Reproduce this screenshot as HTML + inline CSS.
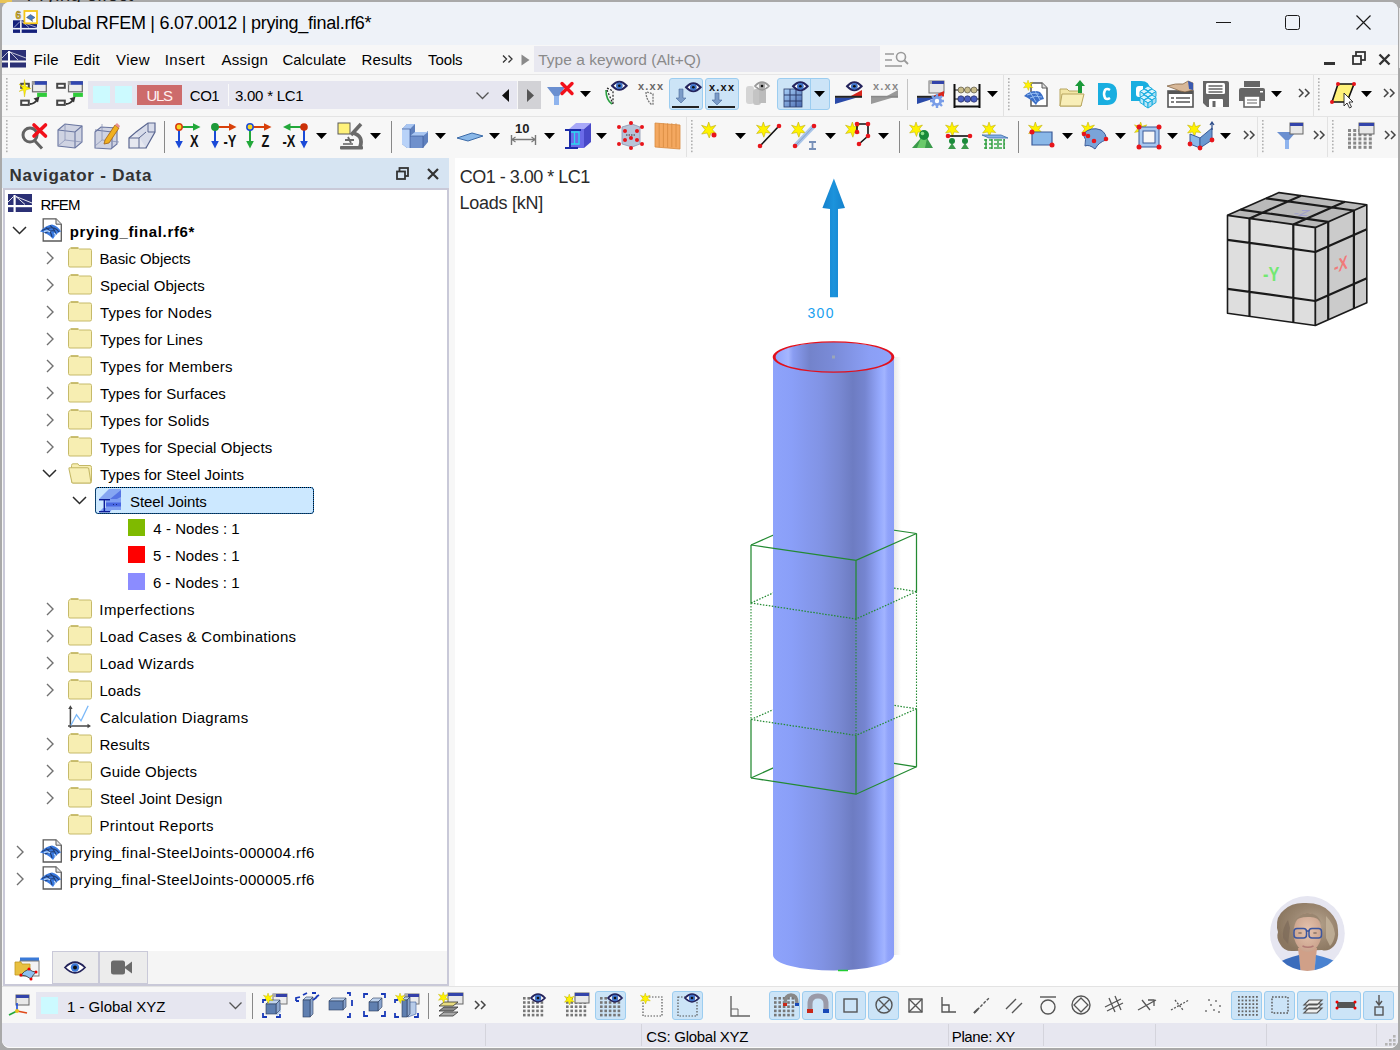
<!DOCTYPE html>
<html><head><meta charset="utf-8"><style>
*{box-sizing:border-box;margin:0;padding:0}
html,body{width:1400px;height:1050px;overflow:hidden;background:#a9a9a9;font-family:"Liberation Sans",sans-serif;color:#000}
.a{position:absolute}
svg.a{overflow:visible}
.t{position:absolute;white-space:pre;line-height:1}
</style></head><body>
<div class="t" style="left:26.5px;top:-14.58px;font-size:19px;color:#1e1e1e;letter-spacing:0.108px;">Prying effect</div>
<div class="a" style="left:0px;top:0px;width:12px;height:3px;background:#e9c558;"></div>
<div class="a" style="left:1399px;top:8px;width:1px;height:60px;background:#e4e4e4;"></div>
<div class="a" style="left:2px;top:2px;width:1396px;height:1046px;background:#f7f7f7;border-radius:8px"></div>
<div class="a" style="left:2px;top:2px;width:1396px;height:43px;background:#eef2f8;border-radius:8px 8px 0 0"></div>
<svg class="a" style="left:13px;top:10px" width="25" height="24" viewBox="0 0 25 24"><rect x="0" y="10.3" width="24" height="7.6" fill="#14207a"/><rect x="0" y="19.5" width="24" height="3.4" fill="#14207a"/><rect x="7" y="10.3" width="1.7" height="12.6" fill="#e8eaf4"/><path d="M1,17.5 L7,11.5 M9,11.5 L16,17.5 M9,12 L24,17.5" stroke="#c0c4e0" stroke-width="0.8" fill="none"/><rect x="11.4" y="1" width="12.6" height="12.3" fill="#fff" stroke="#f5c518" stroke-width="1.8"/><path d="M13.5,7.5 L17.5,4.5 L22,7.5 L19,9.5 L19.5,11.5 L17,9.5 Z" fill="#4a7ac0" stroke="#333" stroke-width="0.4"/><text x="2.6" y="8.6" font-family="Liberation Sans" font-weight="700" font-size="10" fill="#f0c020" stroke="#6a5a20" stroke-width="0.4">6</text></svg>
<div class="t" style="left:41.6px;top:13.76px;font-size:18px;letter-spacing:-0.274px;">Dlubal RFEM | 6.07.0012 | prying_final.rf6*</div>
<div class="a" style="left:1216px;top:22px;width:15px;height:1px;background:#1a1a1a;"></div>
<div class="a" style="left:1285px;top:15px;width:15px;height:15px;background:transparent;border:1.2px solid #1a1a1a;border-radius:2.5px"></div>
<svg class="a" style="left:1356px;top:15px" width="15" height="15" viewBox="0 0 15 15"><path d="M0.5,0.5 L14.5,14.5 M14.5,0.5 L0.5,14.5" stroke="#1a1a1a" stroke-width="1.2"/></svg>
<div class="a" style="left:2px;top:74px;width:1396px;height:1px;background:#e6e6e6;"></div>
<svg class="a" style="left:2px;top:50px" width="25" height="18" viewBox="0 0 25 18"><rect x="0" y="0" width="24" height="10.5" fill="#2b3075"/><rect x="0" y="12.5" width="24" height="5" fill="#2b3075"/><rect x="6" y="1" width="2" height="17" fill="#fff"/><path d="M0,8 L6,2 M8,2 L16,10 M8,2 L24,8" stroke="#fff" stroke-width="0.7" fill="none"/></svg>
<div class="t" style="left:33.6px;top:51.90px;font-size:15px;letter-spacing:0.3px;">File</div>
<div class="t" style="left:73.4px;top:51.90px;font-size:15px;letter-spacing:0.133px;">Edit</div>
<div class="t" style="left:116.0px;top:51.90px;font-size:15px;letter-spacing:0.433px;">View</div>
<div class="t" style="left:164.7px;top:51.90px;font-size:15px;letter-spacing:0.48px;">Insert</div>
<div class="t" style="left:221.4px;top:51.90px;font-size:15px;letter-spacing:0.3px;">Assign</div>
<div class="t" style="left:282.4px;top:51.90px;font-size:15px;letter-spacing:0.137px;">Calculate</div>
<div class="t" style="left:361.6px;top:51.90px;font-size:15px;letter-spacing:0.067px;">Results</div>
<div class="t" style="left:428.0px;top:51.90px;font-size:15px;letter-spacing:-0.1px;">Tools</div>
<svg class="a" style="left:502px;top:55px" width="12" height="8" viewBox="0 0 12 8"><path d="M1,0.5 L4.5,4 L1,7.5 M6.5,0.5 L10,4 L6.5,7.5" stroke="#333" stroke-width="1.3" fill="none"/></svg>
<svg class="a" style="left:521px;top:54px" width="9" height="12" viewBox="0 0 9 12"><path d="M0.5,0.5 L8.5,6 L0.5,11.5 Z" fill="#8a8a8a"/></svg>
<div class="a" style="left:534px;top:46px;width:346px;height:26px;background:#e8e8f0;"></div>
<div class="t" style="left:538.2px;top:52.28px;font-size:15.5px;color:#8a8a8a;letter-spacing:0.019px;">Type a keyword (Alt+Q)</div>
<svg class="a" style="left:884px;top:50px" width="26" height="20" viewBox="0 0 26 20"><path d="M1,4 L10,4 M1,10 L8,10 M1,16 L18,16" stroke="#9a9a9a" stroke-width="1.6"/><circle cx="17" cy="7" r="4.5" fill="none" stroke="#9a9a9a" stroke-width="1.6"/><path d="M20,10 L24,14" stroke="#9a9a9a" stroke-width="1.8"/></svg>
<div class="a" style="left:1324px;top:62px;width:11px;height:3px;background:#333;"></div>
<svg class="a" style="left:1352px;top:51px" width="14" height="14" viewBox="0 0 14 14"><rect x="4" y="1" width="9" height="8" fill="none" stroke="#333" stroke-width="1.8"/><rect x="1" y="5" width="8" height="8" fill="#f7f7f7" stroke="#333" stroke-width="1.8"/></svg>
<svg class="a" style="left:1378px;top:53px" width="13" height="13" viewBox="0 0 13 13"><path d="M1.5,1.5 L11.5,11.5 M11.5,1.5 L1.5,11.5" stroke="#333" stroke-width="2.4"/></svg>
<svg class="a" style="left:6px;top:78px" width="2" height="36" viewBox="0 0 2 36"><rect x="0" y="0.0" width="1.6" height="1.6" fill="#b0b0b0"/><rect x="0" y="3.4" width="1.6" height="1.6" fill="#b0b0b0"/><rect x="0" y="6.8" width="1.6" height="1.6" fill="#b0b0b0"/><rect x="0" y="10.2" width="1.6" height="1.6" fill="#b0b0b0"/><rect x="0" y="13.6" width="1.6" height="1.6" fill="#b0b0b0"/><rect x="0" y="17.0" width="1.6" height="1.6" fill="#b0b0b0"/><rect x="0" y="20.4" width="1.6" height="1.6" fill="#b0b0b0"/><rect x="0" y="23.8" width="1.6" height="1.6" fill="#b0b0b0"/><rect x="0" y="27.2" width="1.6" height="1.6" fill="#b0b0b0"/><rect x="0" y="30.599999999999998" width="1.6" height="1.6" fill="#b0b0b0"/></svg>
<svg class="a" style="left:20px;top:80px" width="28" height="28" viewBox="0 0 28 28"><rect x="1.2" y="3.8" width="7.6" height="4" fill="#fff" stroke="#484848" stroke-width="2"/><rect x="1.2" y="20.6" width="7.6" height="4.3" fill="#fff" stroke="#484848" stroke-width="2"/><rect x="12.5" y="1.8" width="13.8" height="10" fill="#ececec" stroke="#6a6a6a" stroke-width="1.2"/><rect x="14.5" y="1.2" width="12.4" height="3.6" fill="#3046b0"/><rect x="11.9" y="1.2" width="2.6" height="3.6" fill="#9a9a9a"/><rect x="17.1" y="12.8" width="9.8" height="4.1" fill="#30cc3a"/><path d="M10,24 Q14,24 17,20" stroke="#333" stroke-width="1.8" fill="none"/><path d="M13.5,18.5 L19.5,16.5 L18,22.5 Z" fill="#333"/><path d="M4.5,-0.5 L5.8,6.5 L11,8.5 L5.8,10 L4.5,17 L3.5,10 L-1,11.5 L3,8.5 L-1,4 L3.6,6.5 Z" fill="#fff200" stroke="#c8b400" stroke-width="0.4"/></svg>
<svg class="a" style="left:56px;top:80px" width="28" height="28" viewBox="0 0 28 28"><rect x="1.2" y="3.8" width="7.6" height="4" fill="#fff" stroke="#484848" stroke-width="2"/><rect x="1.2" y="20.6" width="7.6" height="4.3" fill="#fff" stroke="#484848" stroke-width="2"/><rect x="12.5" y="1.8" width="13.8" height="10" fill="#ececec" stroke="#6a6a6a" stroke-width="1.2"/><rect x="14.5" y="1.2" width="12.4" height="3.6" fill="#3046b0"/><rect x="11.9" y="1.2" width="2.6" height="3.6" fill="#9a9a9a"/><rect x="17.1" y="12.8" width="9.8" height="4.1" fill="#30cc3a"/><path d="M10,24 Q14,24 17,20" stroke="#333" stroke-width="1.8" fill="none"/><path d="M13.5,18.5 L19.5,16.5 L18,22.5 Z" fill="#333"/></svg>
<div class="a" style="left:88px;top:81px;width:405px;height:28px;background:#e6e6f0;"></div>
<div class="a" style="left:93px;top:86px;width:17px;height:17px;background:#ccfaff;"></div>
<div class="a" style="left:115px;top:86px;width:17px;height:17px;background:#ccfaff;"></div>
<div class="a" style="left:137px;top:85px;width:45px;height:20px;background:#cd6b6b;"></div>
<div class="t" style="left:146.4px;top:88.30px;font-size:15px;color:#fff0f0;letter-spacing:-1.25px;">ULS</div>
<div class="t" style="left:189.8px;top:88.30px;font-size:15px;letter-spacing:-0.5px;">CO1</div>
<div class="a" style="left:228px;top:84px;width:1px;height:22px;background:#fafafa;"></div>
<div class="t" style="left:235.0px;top:88.30px;font-size:15px;letter-spacing:-0.244px;">3.00 * LC1</div>
<svg class="a" style="left:476px;top:92px" width="13" height="8" viewBox="0 0 13 8"><path d="M0.5,0.5 L6.5,6.5 L12.5,0.5" stroke="#555" stroke-width="1.3" fill="none"/></svg>
<div class="a" style="left:493px;top:81px;width:24px;height:28px;background:#e6e6f0;"></div>
<svg class="a" style="left:502px;top:89px" width="8" height="13" viewBox="0 0 8 13"><path d="M7,0 L7,13 L0,6.5 Z" fill="#111"/></svg>
<div class="a" style="left:518px;top:81px;width:23px;height:28px;background:#d2d2d6;"></div>
<svg class="a" style="left:527px;top:89px" width="8" height="13" viewBox="0 0 8 13"><path d="M0,0 L0,13 L7,6.5 Z" fill="#555"/></svg>
<svg class="a" style="left:547px;top:81px" width="28" height="28" viewBox="0 0 28 28"><path d="M0,6 L18,6 L12,15 L12,24 L7,24 L7,15 Z" fill="#6a8fd0"/><path d="M7,15 L12,15 L12,24 L7,24 Z" fill="#8fb4ee"/><path d="M15,2.5 L25,12.5 M25,2.5 L15,12.5" stroke="#f2101a" stroke-width="3.4" stroke-linecap="round"/></svg>
<svg class="a" style="left:580px;top:91px" width="11" height="6" viewBox="0 0 11 6"><path d="M0,0 L11,0 L5.5,6 Z" fill="#000"/></svg>
<svg class="a" style="left:604px;top:80px" width="28" height="28" viewBox="0 0 28 28"><path d="M2,10 Q2,20 8,24" stroke="#2aa040" stroke-width="1.6" fill="none"/><path d="M3,8 L9,11 L9,24 M3,10 L9,24" stroke="#222" stroke-width="1.2" stroke-dasharray="2,1.5" fill="none"/><g transform="translate(8,0.5) scale(1.05)"><path d="M0,5 Q7,-2.5 14,5 Q7,12.5 0,5 Z" fill="#fff" stroke="#24235c" stroke-width="1.8"/><circle cx="7" cy="5" r="3.2" fill="#3f72c9"/><circle cx="7" cy="5" r="1.3" fill="#111"/></g></svg>
<svg class="a" style="left:638px;top:80px" width="28" height="28" viewBox="0 0 28 28"><text x="0" y="9.5" font-family="Liberation Sans" font-weight="700" font-size="11" fill="#666" letter-spacing="1.2">x.xx</text><path d="M8,12 Q8,20 14,25 M9,12 L15,14 L15,25" stroke="#777" stroke-width="1.3" fill="none" stroke-dasharray="2,1"/></svg>
<div class="a" style="left:669px;top:78px;width:34px;height:32px;background:#cce4f7;border:1px solid #9ccdf0;border-radius:3px"></div>
<svg class="a" style="left:671px;top:81px" width="28" height="28" viewBox="0 0 28 28"><path d="M8,8 L12,8 L12,17 L15,17 L10,22 L5,17 L8,17 Z" fill="#7b9cc8" stroke="#4a6a9a" stroke-width="0.6"/><rect x="1" y="25" width="27" height="2" fill="#222"/><g transform="translate(15,1) scale(1.05)"><path d="M0,5 Q7,-2.5 14,5 Q7,12.5 0,5 Z" fill="#fff" stroke="#24235c" stroke-width="1.8"/><circle cx="7" cy="5" r="3.2" fill="#3f72c9"/><circle cx="7" cy="5" r="1.3" fill="#111"/></g></svg>
<div class="a" style="left:705px;top:78px;width:34px;height:32px;background:#cce4f7;border:1px solid #9ccdf0;border-radius:3px"></div>
<svg class="a" style="left:707px;top:81px" width="28" height="28" viewBox="0 0 28 28"><text x="2" y="9.5" font-family="Liberation Sans" font-weight="700" font-size="11" fill="#111" letter-spacing="1.2">x.xx</text><path d="M8,12 L12,12 L12,19 L15,19 L10,24 L5,19 L8,19 Z" fill="#7b9cc8" stroke="#4a6a9a" stroke-width="0.6"/><rect x="1" y="25" width="27" height="2" fill="#222"/></svg>
<svg class="a" style="left:744px;top:80px" width="28" height="28" viewBox="0 0 28 28"><rect x="2" y="6" width="8" height="18" rx="3" fill="#d4d4d4"/><rect x="9" y="9" width="8" height="16" rx="3" fill="#c4c4c4"/><rect x="15" y="10" width="7" height="13" fill="#bcbcbc"/><g transform="translate(11,1) scale(1.0)"><path d="M0,5 Q7,-2.5 14,5 Q7,12.5 0,5 Z" fill="#fff" stroke="#999" stroke-width="1.8"/><circle cx="7" cy="5" r="3.2" fill="#aaa"/><circle cx="7" cy="5" r="1.3" fill="#111"/></g></svg>
<div class="a" style="left:777px;top:78px;width:53px;height:32px;background:#cce4f7;border:1px solid #9ccdf0;border-radius:3px"></div>
<div class="a" style="left:810px;top:79px;width:1px;height:30px;background:#9ccdf0;"></div>
<svg class="a" style="left:780px;top:80px" width="28" height="28" viewBox="0 0 28 28"><defs><linearGradient id="gegr" x1="0" y1="0" x2="1" y2="1"><stop offset="0" stop-color="#a8d0f8"/><stop offset="1" stop-color="#4a6ab0"/></linearGradient></defs><rect x="4" y="9" width="18" height="18" fill="url(#gegr)" stroke="#2a3a6a" stroke-width="0.8"/><path d="M10,9 L10,27 M4,15 L22,15" stroke="#2a3a6a" stroke-width="1"/><path d="M16,9 L16,27 M4,21 L22,21" stroke="#2a3a6a" stroke-width="1"/><g transform="translate(13,1) scale(1.05)"><path d="M0,5 Q7,-2.5 14,5 Q7,12.5 0,5 Z" fill="#fff" stroke="#24235c" stroke-width="1.8"/><circle cx="7" cy="5" r="3.2" fill="#3f72c9"/><circle cx="7" cy="5" r="1.3" fill="#111"/></g></svg>
<svg class="a" style="left:814px;top:91px" width="11" height="6" viewBox="0 0 11 6"><path d="M0,0 L11,0 L5.5,6 Z" fill="#000"/></svg>
<svg class="a" style="left:835px;top:80px" width="28" height="28" viewBox="0 0 28 28"><path d="M15,16.5 L27,16.5 L27,10 Z" fill="#d9261c"/><path d="M0,17.5 L22,17.5 L0,24 Z" fill="#2a4aa8"/><rect x="0" y="15.8" width="27" height="2" fill="#222"/><g transform="translate(12,1) scale(1.05)"><path d="M0,5 Q7,-2.5 14,5 Q7,12.5 0,5 Z" fill="#fff" stroke="#24235c" stroke-width="1.8"/><circle cx="7" cy="5" r="3.2" fill="#3f72c9"/><circle cx="7" cy="5" r="1.3" fill="#111"/></g></svg>
<svg class="a" style="left:871px;top:80px" width="28" height="28" viewBox="0 0 28 28"><path d="M15,16.5 L27,16.5 L27,10 Z" fill="#9a9a9a"/><path d="M0,17.5 L22,17.5 L0,24 Z" fill="#9a9a9a"/><rect x="0" y="15.8" width="27" height="2" fill="#888"/><text x="2" y="9.5" font-family="Liberation Sans" font-weight="700" font-size="11" fill="#888" letter-spacing="1.2">x.xx</text></svg>
<div class="a" style="left:907px;top:79px;width:1px;height:31px;background:#c4c4c4;"></div>
<svg class="a" style="left:917px;top:80px" width="28" height="28" viewBox="0 0 28 28"><rect x="12" y="1" width="15" height="12" fill="#e8e8e8" stroke="#777" stroke-width="1"/><rect x="12" y="1" width="15" height="3" fill="#3344aa"/><rect x="12" y="1" width="3" height="3" fill="#aaa"/><path d="M15,16.5 L27,16.5 L27,11 Z" fill="#d9261c"/><path d="M0,17.5 L20,17.5 L0,24 Z" fill="#2a4aa8"/><rect x="0" y="15.8" width="22" height="2" fill="#222"/><path d="M20,14 L20,28 M13,21 L27,21 M15,16 L25,26 M25,16 L15,26" stroke="#7a9ee8" stroke-width="2.4"/><circle cx="20" cy="21" r="5" fill="#7a9ee8"/><circle cx="20" cy="21" r="2.2" fill="#fff"/></svg>
<svg class="a" style="left:953px;top:80px" width="28" height="28" viewBox="0 0 28 28"><path d="M1.5,4 L1.5,28 M26.5,4 L26.5,28 M1.5,26.5 L26.5,26.5" stroke="#111" stroke-width="2"/><path d="M1.5,10 L26.5,10 M1.5,19 L26.5,19" stroke="#111" stroke-width="1"/><circle cx="8" cy="10" r="3" fill="#c8bc8a" stroke="#5a5440" stroke-width="0.7"/><circle cx="8" cy="19" r="3.2" fill="#4a5ec0" stroke="#2a3060" stroke-width="0.7"/><circle cx="14.5" cy="10" r="3" fill="#c8bc8a" stroke="#5a5440" stroke-width="0.7"/><circle cx="14.5" cy="19" r="3.2" fill="#4a5ec0" stroke="#2a3060" stroke-width="0.7"/><circle cx="21" cy="10" r="3" fill="#c8bc8a" stroke="#5a5440" stroke-width="0.7"/><circle cx="21" cy="19" r="3.2" fill="#4a5ec0" stroke="#2a3060" stroke-width="0.7"/></svg>
<svg class="a" style="left:987px;top:91px" width="11" height="6" viewBox="0 0 11 6"><path d="M0,0 L11,0 L5.5,6 Z" fill="#000"/></svg>
<div class="a" style="left:1003px;top:75px;width:1px;height:41px;background:#e2e2e2;"></div>
<svg class="a" style="left:1008px;top:78px" width="2" height="36" viewBox="0 0 2 36"><rect x="0" y="0.0" width="1.6" height="1.6" fill="#b0b0b0"/><rect x="0" y="3.4" width="1.6" height="1.6" fill="#b0b0b0"/><rect x="0" y="6.8" width="1.6" height="1.6" fill="#b0b0b0"/><rect x="0" y="10.2" width="1.6" height="1.6" fill="#b0b0b0"/><rect x="0" y="13.6" width="1.6" height="1.6" fill="#b0b0b0"/><rect x="0" y="17.0" width="1.6" height="1.6" fill="#b0b0b0"/><rect x="0" y="20.4" width="1.6" height="1.6" fill="#b0b0b0"/><rect x="0" y="23.8" width="1.6" height="1.6" fill="#b0b0b0"/><rect x="0" y="27.2" width="1.6" height="1.6" fill="#b0b0b0"/><rect x="0" y="30.599999999999998" width="1.6" height="1.6" fill="#b0b0b0"/></svg>
<svg class="a" style="left:1022px;top:80px" width="28" height="28" viewBox="0 0 28 28"><path d="M9,3 L20,3 L25,8 L25,26 L9,26 Z" fill="#fff" stroke="#5a5a5a" stroke-width="1.5"/><path d="M20,3 L20,8 L25,8" fill="#ddd" stroke="#5a5a5a" stroke-width="1"/><path d="M2,16 Q10,9 18,12 Q21,15 22,19 Q16,20 14,25 Q9,19 2,16 Z" fill="#3b6fc8"/><path d="M5,15 Q11,12 17,14 M8,18 Q13,15 20,17 M8,12 L14,22 M13,11 L18,20" stroke="#9cc4f4" stroke-width="0.9" fill="none"/><g transform="translate(1,0) scale(0.72)"><path d="M7,0 L8.6,4.6 L13.5,3 L10.3,7 L13.8,10.6 L9,10 L7.5,14.5 L5.6,10 L0.6,11 L3.8,7 L0.5,3 L5.4,4.6 Z" fill="#fff200" stroke="#b8a800" stroke-width="0.5"/></g></svg>
<svg class="a" style="left:1059px;top:80px" width="28" height="28" viewBox="0 0 28 28"><path d="M1,9 L8,9 L10,11 L22,11 L22,26 L1,26 Z" fill="#f3e6a6" stroke="#b8a660" stroke-width="1"/><path d="M3,14 L25,14 L22,26 L1,26 Z" fill="#f8eeb8" stroke="#b8a660" stroke-width="1"/><path d="M19,13 L19,6 L16,6 L21,0 L26,6 L23,6 L23,13 Z" fill="#1a9a3a"/></svg>
<svg class="a" style="left:1097px;top:80px" width="28" height="28" viewBox="0 0 28 28"><path d="M1,3 L10,3 Q20,3 20,14 Q20,25 10,25 L1,25 Z" fill="#19aee0"/><path d="M13,10 Q10,8 8,10 Q6,14 8,18 Q10,20 13,18" stroke="#fff" stroke-width="2.5" fill="none"/></svg>
<svg class="a" style="left:1130px;top:80px" width="28" height="28" viewBox="0 0 28 28"><path d="M1,1 L11,1 Q20,1 20,10 L20,21 L1,21 Z" fill="#19aee0"/><path d="M6,9 Q6,6 9,6 L13,6 L13,17 L9,17 Q6,17 6,14 Z" fill="#fff"/><path d="M14,8.5 L18,6 L22,8.5 L18,11 Z" fill="#d6f2fc" stroke="#19aee0" stroke-width="1"/><path d="M14,8.5 L18,11 L18,16 L14,13.5 Z" fill="#bfe8f8" stroke="#19aee0" stroke-width="1"/><path d="M22,8.5 L18,11 L18,16 L22,13.5 Z" fill="#a8dcf2" stroke="#19aee0" stroke-width="1"/><path d="M10,11.5 L14,9 L18,11.5 L14,14 Z" fill="#d6f2fc" stroke="#19aee0" stroke-width="1"/><path d="M10,11.5 L14,14 L14,19 L10,16.5 Z" fill="#bfe8f8" stroke="#19aee0" stroke-width="1"/><path d="M18,11.5 L14,14 L14,19 L18,16.5 Z" fill="#a8dcf2" stroke="#19aee0" stroke-width="1"/><path d="M18,11.5 L22,9 L26,11.5 L22,14 Z" fill="#d6f2fc" stroke="#19aee0" stroke-width="1"/><path d="M18,11.5 L22,14 L22,19 L18,16.5 Z" fill="#bfe8f8" stroke="#19aee0" stroke-width="1"/><path d="M26,11.5 L22,14 L22,19 L26,16.5 Z" fill="#a8dcf2" stroke="#19aee0" stroke-width="1"/><path d="M14,14.5 L18,12 L22,14.5 L18,17 Z" fill="#d6f2fc" stroke="#19aee0" stroke-width="1"/><path d="M14,14.5 L18,17 L18,22 L14,19.5 Z" fill="#bfe8f8" stroke="#19aee0" stroke-width="1"/><path d="M22,14.5 L18,17 L18,22 L22,19.5 Z" fill="#a8dcf2" stroke="#19aee0" stroke-width="1"/><path d="M10,17.5 L14,15 L18,17.5 L14,20 Z" fill="#d6f2fc" stroke="#19aee0" stroke-width="1"/><path d="M10,17.5 L14,20 L14,25 L10,22.5 Z" fill="#bfe8f8" stroke="#19aee0" stroke-width="1"/><path d="M18,17.5 L14,20 L14,25 L18,22.5 Z" fill="#a8dcf2" stroke="#19aee0" stroke-width="1"/><path d="M18,17.5 L22,15 L26,17.5 L22,20 Z" fill="#d6f2fc" stroke="#19aee0" stroke-width="1"/><path d="M18,17.5 L22,20 L22,25 L18,22.5 Z" fill="#bfe8f8" stroke="#19aee0" stroke-width="1"/><path d="M26,17.5 L22,20 L22,25 L26,22.5 Z" fill="#a8dcf2" stroke="#19aee0" stroke-width="1"/><path d="M14,20.5 L18,18 L22,20.5 L18,23 Z" fill="#d6f2fc" stroke="#19aee0" stroke-width="1"/><path d="M14,20.5 L18,23 L18,28 L14,25.5 Z" fill="#bfe8f8" stroke="#19aee0" stroke-width="1"/><path d="M22,20.5 L18,23 L18,28 L22,25.5 Z" fill="#a8dcf2" stroke="#19aee0" stroke-width="1"/></svg>
<svg class="a" style="left:1166px;top:80px" width="28" height="28" viewBox="0 0 28 28"><rect x="2" y="11" width="25" height="16" fill="#fff" stroke="#555" stroke-width="1.6"/><rect x="2" y="11" width="25" height="3" fill="#555"/><path d="M5,18 L8,18 M10,18 L24,18 M5,22 L8,22 M10,22 L24,22" stroke="#555" stroke-width="1.4"/><path d="M1,6 Q10,3 17,4 L22,1 L27,3 L27,10 L19,12 Q12,11 9,9 Z" fill="#d8b898" stroke="#7a5a3a" stroke-width="0.7"/><path d="M22,1 L27,3 L27,10 L23,9 Z" fill="#3a5ab0"/></svg>
<svg class="a" style="left:1202px;top:80px" width="28" height="28" viewBox="0 0 28 28"><path d="M1,1 L25,1 Q27,1 27,3 L27,27 L5,27 L1,23 Z" fill="#666"/><rect x="4" y="3" width="19" height="11" rx="1.5" fill="#fff"/><path d="M6.5,6 L20.5,6 M6.5,9 L20.5,9 M6.5,12 L20.5,12" stroke="#666" stroke-width="1.3"/><path d="M7,27 L7,20 Q7,19 8,19 L20,19 Q21,19 21,20 L21,27 Z" fill="#fff"/><rect x="10.5" y="21" width="3" height="6" fill="#666"/></svg>
<svg class="a" style="left:1238px;top:80px" width="28" height="28" viewBox="0 0 28 28"><rect x="6" y="1" width="16" height="6" fill="#666"/><path d="M1,10 Q1,8 3,8 L25,8 Q27,8 27,10 L27,21 L1,21 Z" fill="#666"/><rect x="6" y="16" width="16" height="11" fill="#fff" stroke="#666" stroke-width="1.6"/><path d="M9,20 L19,20 M9,23 L19,23" stroke="#666" stroke-width="1.2"/><rect x="22" y="11" width="3" height="1.5" fill="#fff"/></svg>
<svg class="a" style="left:1271px;top:91px" width="11" height="6" viewBox="0 0 11 6"><path d="M0,0 L11,0 L5.5,6 Z" fill="#000"/></svg>
<svg class="a" style="left:1298px;top:87.5px" width="12" height="10" viewBox="0 0 12 10"><path d="M1,1 L5,5 L1,9 M7,1 L11,5 L7,9" stroke="#444" stroke-width="1.5" fill="none"/></svg>
<div class="a" style="left:1313px;top:75px;width:1px;height:41px;background:#e2e2e2;"></div>
<svg class="a" style="left:1318px;top:78px" width="2" height="36" viewBox="0 0 2 36"><rect x="0" y="0.0" width="1.6" height="1.6" fill="#b0b0b0"/><rect x="0" y="3.4" width="1.6" height="1.6" fill="#b0b0b0"/><rect x="0" y="6.8" width="1.6" height="1.6" fill="#b0b0b0"/><rect x="0" y="10.2" width="1.6" height="1.6" fill="#b0b0b0"/><rect x="0" y="13.6" width="1.6" height="1.6" fill="#b0b0b0"/><rect x="0" y="17.0" width="1.6" height="1.6" fill="#b0b0b0"/><rect x="0" y="20.4" width="1.6" height="1.6" fill="#b0b0b0"/><rect x="0" y="23.8" width="1.6" height="1.6" fill="#b0b0b0"/><rect x="0" y="27.2" width="1.6" height="1.6" fill="#b0b0b0"/><rect x="0" y="30.599999999999998" width="1.6" height="1.6" fill="#b0b0b0"/></svg>
<svg class="a" style="left:1330px;top:81px" width="28" height="28" viewBox="0 0 28 28"><path d="M8,3 L24,3 L17,21 L2,21 Z" fill="#fff27a" stroke="#111" stroke-width="1.6"/><circle cx="8" cy="3" r="2" fill="#e8151b"/><circle cx="24" cy="3" r="2" fill="#e8151b"/><circle cx="2" cy="21" r="2" fill="#e8151b"/><circle cx="17" cy="21" r="2" fill="#e8151b"/><path d="M14,12 L14,25 L17,22 L19.5,27 L21.5,26 L19,21 L23,21 Z" fill="#fff" stroke="#222" stroke-width="0.9"/></svg>
<svg class="a" style="left:1361px;top:91px" width="11" height="6" viewBox="0 0 11 6"><path d="M0,0 L11,0 L5.5,6 Z" fill="#000"/></svg>
<svg class="a" style="left:1383px;top:87.5px" width="12" height="10" viewBox="0 0 12 10"><path d="M1,1 L5,5 L1,9 M7,1 L11,5 L7,9" stroke="#444" stroke-width="1.5" fill="none"/></svg>
<div class="a" style="left:2px;top:116px;width:1396px;height:1px;background:#e4e4e4;"></div>
<svg class="a" style="left:6px;top:120px" width="2" height="36" viewBox="0 0 2 36"><rect x="0" y="0.0" width="1.6" height="1.6" fill="#b0b0b0"/><rect x="0" y="3.4" width="1.6" height="1.6" fill="#b0b0b0"/><rect x="0" y="6.8" width="1.6" height="1.6" fill="#b0b0b0"/><rect x="0" y="10.2" width="1.6" height="1.6" fill="#b0b0b0"/><rect x="0" y="13.6" width="1.6" height="1.6" fill="#b0b0b0"/><rect x="0" y="17.0" width="1.6" height="1.6" fill="#b0b0b0"/><rect x="0" y="20.4" width="1.6" height="1.6" fill="#b0b0b0"/><rect x="0" y="23.8" width="1.6" height="1.6" fill="#b0b0b0"/><rect x="0" y="27.2" width="1.6" height="1.6" fill="#b0b0b0"/><rect x="0" y="30.599999999999998" width="1.6" height="1.6" fill="#b0b0b0"/></svg>
<svg class="a" style="left:20px;top:122px" width="28" height="28" viewBox="0 0 28 28"><circle cx="10" cy="13" r="7" fill="none" stroke="#626262" stroke-width="3"/><path d="M15,19 L22,26.5" stroke="#626262" stroke-width="3"/><path d="M14,3 L25.5,14 M25.5,3 L14,14" stroke="#f2101a" stroke-width="3.6" stroke-linecap="round"/></svg>
<svg class="a" style="left:56px;top:122px" width="28" height="28" viewBox="0 0 28 28"><path d="M2,8 L9,2 L26,4 L26,20 L19,26 L2,24 Z" fill="#cfd3e2" stroke="#6a76a0" stroke-width="1.1"/><path d="M2,8 L19,10 L26,4 M19,10 L19,26" stroke="#6a76a0" stroke-width="1.1" fill="none"/><path d="M9,2 L9,18 L2,24 M9,18 L26,20" stroke="#8a94b8" stroke-width="0.8" fill="none"/></svg>
<svg class="a" style="left:93px;top:122px" width="28" height="28" viewBox="0 0 28 28"><path d="M2,10 L8,5 L24,6 L24,22 L18,27 L2,26 Z" fill="#cfd3e2" stroke="#6a76a0" stroke-width="1.1"/><path d="M2,8 L19,10 L26,4 M19,10 L19,26" stroke="#6a76a0" stroke-width="1.1" fill="none"/><path d="M9,2 L9,18 L2,24 M9,18 L26,20" stroke="#8a94b8" stroke-width="0.8" fill="none"/><path d="M12,18 L22,3 L26,6 L16,21 L11,22 Z" fill="#f0b020" stroke="#a06010" stroke-width="0.8"/><path d="M22,3 L26,6 L27,4 L24,1 Z" fill="#e89090"/></svg>
<svg class="a" style="left:128px;top:122px" width="28" height="28" viewBox="0 0 28 28"><path d="M1,16 L8,10 L18,10 L18,26 L1,26 Z" fill="#e6e8f0" stroke="#5a6690" stroke-width="1.2"/><path d="M8,10 L20,1 L27,1 L27,10 L18,26" fill="#d8dcea" stroke="#5a6690" stroke-width="1.2"/><path d="M1,16 L11,16 L11,26 M11,16 L18,10 M20,1 L20,10 L27,10" stroke="#5a6690" stroke-width="1" fill="none"/></svg>
<div class="a" style="left:164px;top:121px;width:1px;height:32px;background:#888;"></div>
<svg class="a" style="left:174px;top:122px" width="28" height="28" viewBox="0 0 28 28"><path d="M7,5 L20,5" stroke="#22a83a" stroke-width="2"/><path d="M19,1.2 L26.5,5 L19,8.8 Z" fill="#22a83a"/><path d="M5,8 L5,20" stroke="#1a4ad8" stroke-width="2"/><path d="M1.2,19 L5,26.5 L8.8,19 Z" fill="#1a4ad8"/><circle cx="5" cy="5" r="3.2" fill="#f8d820" stroke="#d83a10" stroke-width="1.5"/><g transform="translate(16,25) scale(0.78,1)"><text x="0" y="0" font-family="Liberation Sans" font-weight="700" font-size="16.5" fill="#111">X</text></g></svg>
<svg class="a" style="left:210px;top:122px" width="28" height="28" viewBox="0 0 28 28"><path d="M7,5 L20,5" stroke="#d8400a" stroke-width="2"/><path d="M19,1.2 L26.5,5 L19,8.8 Z" fill="#d8400a"/><path d="M5,8 L5,20" stroke="#1a4ad8" stroke-width="2"/><path d="M1.2,19 L5,26.5 L8.8,19 Z" fill="#1a4ad8"/><circle cx="5" cy="5" r="3.2" fill="#1e9a3a" stroke="#1e9a3a" stroke-width="1.5"/><g transform="translate(13.5,25) scale(0.78,1)"><text x="0" y="0" font-family="Liberation Sans" font-weight="700" font-size="16.5" fill="#111">-Y</text></g></svg>
<svg class="a" style="left:245px;top:122px" width="28" height="28" viewBox="0 0 28 28"><path d="M7,5 L20,5" stroke="#d8400a" stroke-width="2"/><path d="M19,1.2 L26.5,5 L19,8.8 Z" fill="#d8400a"/><path d="M5,8 L5,20" stroke="#22a83a" stroke-width="2"/><path d="M1.2,19 L5,26.5 L8.8,19 Z" fill="#22a83a"/><circle cx="5" cy="5" r="3.2" fill="#f8d820" stroke="#1a4ad8" stroke-width="1.5"/><g transform="translate(16.5,25) scale(0.78,1)"><text x="0" y="0" font-family="Liberation Sans" font-weight="700" font-size="16.5" fill="#111">Z</text></g></svg>
<svg class="a" style="left:283px;top:122px" width="28" height="28" viewBox="0 0 28 28"><path d="M6,5 L19,5" stroke="#22a83a" stroke-width="2"/><path d="M7.5,1.2 L0,5 L7.5,8.8 Z" fill="#22a83a"/><path d="M21,8 L21,20" stroke="#1a4ad8" stroke-width="2"/><path d="M17.2,19 L21,26.5 L24.8,19 Z" fill="#1a4ad8"/><circle cx="21" cy="5" r="3.8" fill="#cc3008"/><g transform="translate(-0.5,25) scale(0.78,1)"><text x="0" y="0" font-family="Liberation Sans" font-weight="700" font-size="16.5" fill="#111">-X</text></g></svg>
<svg class="a" style="left:316px;top:133px" width="11" height="6" viewBox="0 0 11 6"><path d="M0,0 L11,0 L5.5,6 Z" fill="#000"/></svg>
<svg class="a" style="left:337px;top:122px" width="28" height="28" viewBox="0 0 28 28"><rect x="1" y="1" width="12" height="11" fill="#fff27a" stroke="#5a5a5a" stroke-width="1"/><path d="M24,2 L14,13" stroke="#6a6a6a" stroke-width="3.6"/><path d="M16,11 Q27,14 23,25" stroke="#6a6a6a" stroke-width="3.8" fill="none"/><path d="M8,18 L17,18 M11,15 L14,21" stroke="#6a6a6a" stroke-width="1.8"/><rect x="3" y="24" width="23" height="3.5" rx="1" fill="#6a6a6a"/><path d="M6,22 L16,22" stroke="#6a6a6a" stroke-width="1.6"/></svg>
<svg class="a" style="left:370px;top:133px" width="11" height="6" viewBox="0 0 11 6"><path d="M0,0 L11,0 L5.5,6 Z" fill="#000"/></svg>
<div class="a" style="left:391px;top:121px;width:1px;height:32px;background:#888;"></div>
<svg class="a" style="left:401px;top:122px" width="28" height="28" viewBox="0 0 28 28"><path d="M1,7 L6,2 L14,2 L14,13 L22,13 L27,9 L27,20 L22,26 L6,26 L1,22 Z" fill="#5f80bd"/><path d="M1,7 L6,2 L14,2 L9,7 Z" fill="#a9c6f2"/><path d="M9,14 L14,10 L27,10 L22,14 Z" fill="#a9c6f2"/><path d="M1,7 L9,7 L9,26 L6,26 L1,22 Z" fill="#b8d2f8"/><path d="M9,14 L22,14 L22,26 L9,26 Z" fill="#6f90cc"/><path d="M1,7 L9,7 L9,14 L22,14 L22,26 M9,14 L9,26" stroke="#3a5a98" stroke-width="0.7" fill="none"/></svg>
<svg class="a" style="left:435px;top:133px" width="11" height="6" viewBox="0 0 11 6"><path d="M0,0 L11,0 L5.5,6 Z" fill="#000"/></svg>
<svg class="a" style="left:456px;top:122px" width="28" height="28" viewBox="0 0 28 28"><path d="M1,16 L16,11 L27,14 L12,19 Z" fill="#8ab8e8" stroke="#3a6aa8" stroke-width="1"/></svg>
<svg class="a" style="left:489px;top:133px" width="11" height="6" viewBox="0 0 11 6"><path d="M0,0 L11,0 L5.5,6 Z" fill="#000"/></svg>
<svg class="a" style="left:510px;top:122px" width="28" height="28" viewBox="0 0 28 28"><text x="5" y="11" font-family="Liberation Sans" font-weight="700" font-size="13" fill="#222">10</text><path d="M1.5,13 L1.5,23 M25.5,13 L25.5,23 M2,17.5 L25,17.5" stroke="#777" stroke-width="1.4"/><path d="M2,17.5 L5.5,15 M2,17.5 L5.5,20 M25,17.5 L21.5,15 M25,17.5 L21.5,20" stroke="#777" stroke-width="1.1"/></svg>
<svg class="a" style="left:544px;top:133px" width="11" height="6" viewBox="0 0 11 6"><path d="M0,0 L11,0 L5.5,6 Z" fill="#000"/></svg>
<svg class="a" style="left:564px;top:122px" width="28" height="28" viewBox="0 0 28 28"><path d="M5,7 L12,1 L27,1 L20,7 Z" fill="#a8a8f8"/><path d="M20,7 L27,1 L27,20 L20,26 Z" fill="#4848c8"/><rect x="5" y="7" width="15" height="19" fill="#6a6ae8"/><path d="M6,10 L15,10 L15,22 L6,22 M10.5,10 L10.5,22" stroke="#28d8f0" stroke-width="1.3" fill="none"/><path d="M1,8 L17,8 M1,26 L14,26" stroke="#1a2aa8" stroke-width="2"/><path d="M6,8 L6,26" stroke="#1a2aa8" stroke-width="2"/></svg>
<svg class="a" style="left:596px;top:133px" width="11" height="6" viewBox="0 0 11 6"><path d="M0,0 L11,0 L5.5,6 Z" fill="#000"/></svg>
<svg class="a" style="left:617px;top:122px" width="28" height="28" viewBox="0 0 28 28"><path d="M5,5 L15,2 L23,5 L23,22 L15,25 L5,22 Z" fill="#b8c4d8" stroke="#8a96b0" stroke-width="0.8"/><path d="M9,13 L19,13" stroke="#333" stroke-width="1" stroke-dasharray="1.5,1"/><circle cx="2" cy="5" r="2" fill="#e8151b"/><circle cx="14" cy="1" r="2" fill="#e8151b"/><circle cx="25" cy="5" r="2" fill="#e8151b"/><circle cx="8" cy="9" r="2" fill="#e8151b"/><circle cx="20" cy="9" r="2" fill="#e8151b"/><circle cx="2" cy="22" r="2" fill="#e8151b"/><circle cx="14" cy="26" r="2" fill="#e8151b"/><circle cx="25" cy="22" r="2" fill="#e8151b"/><circle cx="8" cy="18" r="2" fill="#e8151b"/><circle cx="20" cy="18" r="2" fill="#e8151b"/><circle cx="14" cy="16" r="2" fill="#e8151b"/></svg>
<svg class="a" style="left:654px;top:122px" width="28" height="28" viewBox="0 0 28 28"><path d="M1,1 L26,3 L26,27 L1,25 Z" fill="#f4a860" stroke="#d88a40" stroke-width="0.8"/><path d="M5.2,1.3 L5.2,25.3" stroke="#d88a40" stroke-width="0.8"/><path d="M9.4,1.3 L9.4,25.3" stroke="#d88a40" stroke-width="0.8"/><path d="M13.600000000000001,1.3 L13.600000000000001,25.3" stroke="#d88a40" stroke-width="0.8"/><path d="M17.8,1.3 L17.8,25.3" stroke="#d88a40" stroke-width="0.8"/><path d="M22.0,1.3 L22.0,25.3" stroke="#d88a40" stroke-width="0.8"/></svg>
<div class="a" style="left:686px;top:117px;width:1px;height:40px;background:#e2e2e2;"></div>
<svg class="a" style="left:691px;top:120px" width="2" height="36" viewBox="0 0 2 36"><rect x="0" y="0.0" width="1.6" height="1.6" fill="#b0b0b0"/><rect x="0" y="3.4" width="1.6" height="1.6" fill="#b0b0b0"/><rect x="0" y="6.8" width="1.6" height="1.6" fill="#b0b0b0"/><rect x="0" y="10.2" width="1.6" height="1.6" fill="#b0b0b0"/><rect x="0" y="13.6" width="1.6" height="1.6" fill="#b0b0b0"/><rect x="0" y="17.0" width="1.6" height="1.6" fill="#b0b0b0"/><rect x="0" y="20.4" width="1.6" height="1.6" fill="#b0b0b0"/><rect x="0" y="23.8" width="1.6" height="1.6" fill="#b0b0b0"/><rect x="0" y="27.2" width="1.6" height="1.6" fill="#b0b0b0"/><rect x="0" y="30.599999999999998" width="1.6" height="1.6" fill="#b0b0b0"/></svg>
<svg class="a" style="left:701px;top:122px" width="28" height="28" viewBox="0 0 28 28"><g transform="translate(0,0) scale(1.1)"><path d="M7,0 L8.6,4.6 L13.5,3 L10.3,7 L13.8,10.6 L9,10 L7.5,14.5 L5.6,10 L0.6,11 L3.8,7 L0.5,3 L5.4,4.6 Z" fill="#fff200" stroke="#b8a800" stroke-width="0.5"/></g><circle cx="13" cy="13" r="2.5" fill="#e8151b"/></svg>
<svg class="a" style="left:735px;top:133px" width="11" height="6" viewBox="0 0 11 6"><path d="M0,0 L11,0 L5.5,6 Z" fill="#000"/></svg>
<svg class="a" style="left:756px;top:122px" width="28" height="28" viewBox="0 0 28 28"><g transform="translate(0,0) scale(1.05)"><path d="M7,0 L8.6,4.6 L13.5,3 L10.3,7 L13.8,10.6 L9,10 L7.5,14.5 L5.6,10 L0.6,11 L3.8,7 L0.5,3 L5.4,4.6 Z" fill="#fff200" stroke="#b8a800" stroke-width="0.5"/></g><path d="M4,24 L23,4" stroke="#111" stroke-width="1.6"/><circle cx="4" cy="24" r="2.3" fill="#e8151b"/><circle cx="23" cy="4" r="2.3" fill="#e8151b"/></svg>
<svg class="a" style="left:791px;top:122px" width="28" height="28" viewBox="0 0 28 28"><g transform="translate(0,0) scale(1.05)"><path d="M7,0 L8.6,4.6 L13.5,3 L10.3,7 L13.8,10.6 L9,10 L7.5,14.5 L5.6,10 L0.6,11 L3.8,7 L0.5,3 L5.4,4.6 Z" fill="#fff200" stroke="#b8a800" stroke-width="0.5"/></g><path d="M4,24 L23,4" stroke="#a8c4e8" stroke-width="4.5"/><path d="M4,24 L23,4" stroke="#7896c0" stroke-width="0.8"/><circle cx="4" cy="24" r="2.3" fill="#e8151b"/><circle cx="23" cy="4" r="2.3" fill="#e8151b"/><path d="M18,20 L25,20 M21.5,20 L21.5,27 M18,27 L25,27" stroke="#7890b8" stroke-width="1.8"/></svg>
<svg class="a" style="left:825px;top:133px" width="11" height="6" viewBox="0 0 11 6"><path d="M0,0 L11,0 L5.5,6 Z" fill="#000"/></svg>
<svg class="a" style="left:845px;top:122px" width="28" height="28" viewBox="0 0 28 28"><g transform="translate(0,0) scale(1.05)"><path d="M7,0 L8.6,4.6 L13.5,3 L10.3,7 L13.8,10.6 L9,10 L7.5,14.5 L5.6,10 L0.6,11 L3.8,7 L0.5,3 L5.4,4.6 Z" fill="#fff200" stroke="#b8a800" stroke-width="0.5"/></g><path d="M12,2 L23,2 L23,14 L14,22" stroke="#111" stroke-width="1.6" fill="none"/><path d="M12,2 L12,10" stroke="#111" stroke-width="1.6"/><circle cx="12" cy="2" r="2.3" fill="#e8151b"/><circle cx="23" cy="2" r="2.3" fill="#e8151b"/><circle cx="12" cy="10" r="2.3" fill="#e8151b"/><circle cx="23" cy="14" r="2.3" fill="#e8151b"/><circle cx="14" cy="22" r="2.3" fill="#e8151b"/></svg>
<svg class="a" style="left:878px;top:133px" width="11" height="6" viewBox="0 0 11 6"><path d="M0,0 L11,0 L5.5,6 Z" fill="#000"/></svg>
<div class="a" style="left:899px;top:121px;width:1px;height:32px;background:#888;"></div>
<svg class="a" style="left:909px;top:122px" width="28" height="28" viewBox="0 0 28 28"><g transform="translate(0,0) scale(1.0)"><path d="M7,0 L8.6,4.6 L13.5,3 L10.3,7 L13.8,10.6 L9,10 L7.5,14.5 L5.6,10 L0.6,11 L3.8,7 L0.5,3 L5.4,4.6 Z" fill="#fff200" stroke="#b8a800" stroke-width="0.5"/></g><path d="M3,26 L12,16 L18,16 L24,26 Z" fill="#3a9a4a"/><path d="M12,16 L18,16 L16,26 L8,26 Z" fill="#6aca6a"/><circle cx="15" cy="13" r="5" fill="#1a8a3a"/><circle cx="13.5" cy="11.5" r="1.8" fill="#8ae08a"/></svg>
<svg class="a" style="left:945px;top:122px" width="28" height="28" viewBox="0 0 28 28"><g transform="translate(0,0) scale(1.0)"><path d="M7,0 L8.6,4.6 L13.5,3 L10.3,7 L13.8,10.6 L9,10 L7.5,14.5 L5.6,10 L0.6,11 L3.8,7 L0.5,3 L5.4,4.6 Z" fill="#fff200" stroke="#b8a800" stroke-width="0.5"/></g><path d="M3,14 L25,14" stroke="#111" stroke-width="1.6"/><circle cx="3" cy="14" r="2.3" fill="#e8151b"/><circle cx="25" cy="14" r="2.3" fill="#e8151b"/><path d="M3,27 L7,21 L11,27 Z M16,27 L20,21 L24,27 Z" fill="#3a9a4a"/><circle cx="7" cy="19" r="3" fill="#1a8a3a"/><circle cx="20" cy="19" r="3" fill="#1a8a3a"/></svg>
<svg class="a" style="left:981px;top:122px" width="28" height="28" viewBox="0 0 28 28"><g transform="translate(1,0) scale(1.0)"><path d="M7,0 L8.6,4.6 L13.5,3 L10.3,7 L13.8,10.6 L9,10 L7.5,14.5 L5.6,10 L0.6,11 L3.8,7 L0.5,3 L5.4,4.6 Z" fill="#fff200" stroke="#b8a800" stroke-width="0.5"/></g><path d="M1,13 L20,13 L27,16 L8,16 Z" fill="#8ab4e8" stroke="#3a6aa8" stroke-width="0.8"/><path d="M3,18 L24,18 M3,22 L24,22 M3,26 L24,26" stroke="#3aaa4a" stroke-width="1.6" stroke-dasharray="3,2"/><path d="M5,17 L5,27 M11,17 L11,27 M17,17 L17,27 M23,17 L23,27" stroke="#2a9a3a" stroke-width="1.4"/></svg>
<div class="a" style="left:1018px;top:121px;width:1px;height:32px;background:#888;"></div>
<svg class="a" style="left:1028px;top:122px" width="28" height="28" viewBox="0 0 28 28"><g transform="translate(0,0) scale(1.05)"><path d="M7,0 L8.6,4.6 L13.5,3 L10.3,7 L13.8,10.6 L9,10 L7.5,14.5 L5.6,10 L0.6,11 L3.8,7 L0.5,3 L5.4,4.6 Z" fill="#fff200" stroke="#b8a800" stroke-width="0.5"/></g><path d="M4,10 L24,10 L24,23 L4,23 Z" fill="#8ab8e8" stroke="#3a5a98" stroke-width="1.2"/><circle cx="4" cy="10" r="2.5" fill="#e8151b"/><circle cx="24" cy="23" r="2.5" fill="#e8151b"/></svg>
<svg class="a" style="left:1062px;top:133px" width="11" height="6" viewBox="0 0 11 6"><path d="M0,0 L11,0 L5.5,6 Z" fill="#000"/></svg>
<svg class="a" style="left:1081px;top:122px" width="28" height="28" viewBox="0 0 28 28"><g transform="translate(0,0) scale(1.0)"><path d="M7,0 L8.6,4.6 L13.5,3 L10.3,7 L13.8,10.6 L9,10 L7.5,14.5 L5.6,10 L0.6,11 L3.8,7 L0.5,3 L5.4,4.6 Z" fill="#fff200" stroke="#b8a800" stroke-width="0.5"/></g><path d="M2,12 Q10,4 20,8 Q26,12 25,18 Q18,20 14,27 Q8,22 4,24 Q6,17 2,12 Z" fill="#7aa4d8" stroke="#3a5a98" stroke-width="1"/><circle cx="3" cy="12" r="2.3" fill="#e8151b"/><circle cx="7" cy="14" r="2.3" fill="#e8151b"/><circle cx="25" cy="17" r="2.3" fill="#e8151b"/><circle cx="13" cy="19" r="2.3" fill="#e8151b"/></svg>
<svg class="a" style="left:1115px;top:133px" width="11" height="6" viewBox="0 0 11 6"><path d="M0,0 L11,0 L5.5,6 Z" fill="#000"/></svg>
<svg class="a" style="left:1134px;top:122px" width="28" height="28" viewBox="0 0 28 28"><g transform="translate(0,0) scale(0.95)"><path d="M7,0 L8.6,4.6 L13.5,3 L10.3,7 L13.8,10.6 L9,10 L7.5,14.5 L5.6,10 L0.6,11 L3.8,7 L0.5,3 L5.4,4.6 Z" fill="#fff200" stroke="#b8a800" stroke-width="0.5"/></g><rect x="5" y="5" width="20" height="20" fill="#a8c8f0" stroke="#3a5a98" stroke-width="1"/><rect x="9" y="9" width="12" height="12" fill="#f7f7f7" stroke="#3a5a98" stroke-width="1"/><circle cx="5" cy="5" r="2.5" fill="#e8151b"/><circle cx="25" cy="5" r="2.5" fill="#e8151b"/><circle cx="5" cy="25" r="2.5" fill="#e8151b"/><circle cx="25" cy="25" r="2.5" fill="#e8151b"/></svg>
<svg class="a" style="left:1167px;top:133px" width="11" height="6" viewBox="0 0 11 6"><path d="M0,0 L11,0 L5.5,6 Z" fill="#000"/></svg>
<svg class="a" style="left:1187px;top:122px" width="28" height="28" viewBox="0 0 28 28"><g transform="translate(0,0) scale(1.0)"><path d="M7,0 L8.6,4.6 L13.5,3 L10.3,7 L13.8,10.6 L9,10 L7.5,14.5 L5.6,10 L0.6,11 L3.8,7 L0.5,3 L5.4,4.6 Z" fill="#fff200" stroke="#b8a800" stroke-width="0.5"/></g><path d="M3,12 L13,16 L13,26 L3,22 Z" fill="#8ab8e8" stroke="#3a5a98" stroke-width="1"/><path d="M13,16 L25,6 L25,18 L13,26 Z" fill="#6a98d0" stroke="#3a5a98" stroke-width="1"/><path d="M25,1 L25,8 M23,3 L25,0 L27,3" stroke="#2a4a88" stroke-width="1.2" fill="none"/><circle cx="3" cy="22" r="2.4" fill="#e8151b"/><circle cx="13" cy="26" r="2.4" fill="#e8151b"/><circle cx="25" cy="18" r="2.4" fill="#e8151b"/></svg>
<svg class="a" style="left:1220px;top:133px" width="11" height="6" viewBox="0 0 11 6"><path d="M0,0 L11,0 L5.5,6 Z" fill="#000"/></svg>
<svg class="a" style="left:1243px;top:129.5px" width="12" height="10" viewBox="0 0 12 10"><path d="M1,1 L5,5 L1,9 M7,1 L11,5 L7,9" stroke="#444" stroke-width="1.5" fill="none"/></svg>
<div class="a" style="left:1257px;top:117px;width:1px;height:40px;background:#e2e2e2;"></div>
<svg class="a" style="left:1262px;top:120px" width="2" height="36" viewBox="0 0 2 36"><rect x="0" y="0.0" width="1.6" height="1.6" fill="#b0b0b0"/><rect x="0" y="3.4" width="1.6" height="1.6" fill="#b0b0b0"/><rect x="0" y="6.8" width="1.6" height="1.6" fill="#b0b0b0"/><rect x="0" y="10.2" width="1.6" height="1.6" fill="#b0b0b0"/><rect x="0" y="13.6" width="1.6" height="1.6" fill="#b0b0b0"/><rect x="0" y="17.0" width="1.6" height="1.6" fill="#b0b0b0"/><rect x="0" y="20.4" width="1.6" height="1.6" fill="#b0b0b0"/><rect x="0" y="23.8" width="1.6" height="1.6" fill="#b0b0b0"/><rect x="0" y="27.2" width="1.6" height="1.6" fill="#b0b0b0"/><rect x="0" y="30.599999999999998" width="1.6" height="1.6" fill="#b0b0b0"/></svg>
<svg class="a" style="left:1276px;top:122px" width="28" height="28" viewBox="0 0 28 28"><path d="M1,10 L20,10 L13,18 L13,27 L9,27 L9,18 Z" fill="#6a8fd0"/><path d="M9,18 L13,18 L13,27 L9,27 Z" fill="#8fb4ee"/><rect x="14" y="1" width="13" height="11" fill="#e8e8e8" stroke="#666" stroke-width="1"/><rect x="14" y="1" width="13" height="3" fill="#3344aa"/></svg>
<svg class="a" style="left:1313px;top:129.5px" width="12" height="10" viewBox="0 0 12 10"><path d="M1,1 L5,5 L1,9 M7,1 L11,5 L7,9" stroke="#444" stroke-width="1.5" fill="none"/></svg>
<div class="a" style="left:1327px;top:117px;width:1px;height:40px;background:#e2e2e2;"></div>
<svg class="a" style="left:1332px;top:120px" width="2" height="36" viewBox="0 0 2 36"><rect x="0" y="0.0" width="1.6" height="1.6" fill="#b0b0b0"/><rect x="0" y="3.4" width="1.6" height="1.6" fill="#b0b0b0"/><rect x="0" y="6.8" width="1.6" height="1.6" fill="#b0b0b0"/><rect x="0" y="10.2" width="1.6" height="1.6" fill="#b0b0b0"/><rect x="0" y="13.6" width="1.6" height="1.6" fill="#b0b0b0"/><rect x="0" y="17.0" width="1.6" height="1.6" fill="#b0b0b0"/><rect x="0" y="20.4" width="1.6" height="1.6" fill="#b0b0b0"/><rect x="0" y="23.8" width="1.6" height="1.6" fill="#b0b0b0"/><rect x="0" y="27.2" width="1.6" height="1.6" fill="#b0b0b0"/><rect x="0" y="30.599999999999998" width="1.6" height="1.6" fill="#b0b0b0"/></svg>
<svg class="a" style="left:1347px;top:122px" width="28" height="28" viewBox="0 0 28 28"><rect x="1.0" y="7.0" width="3" height="3" fill="#888"/><rect x="1.0" y="11.2" width="3" height="3" fill="#888"/><rect x="1.0" y="15.4" width="3" height="3" fill="#888"/><rect x="1.0" y="19.6" width="3" height="3" fill="#888"/><rect x="1.0" y="23.8" width="3" height="3" fill="#888"/><rect x="6.2" y="7.0" width="3" height="3" fill="#888"/><rect x="6.2" y="11.2" width="3" height="3" fill="#888"/><rect x="6.2" y="15.4" width="3" height="3" fill="#888"/><rect x="6.2" y="19.6" width="3" height="3" fill="#888"/><rect x="6.2" y="23.8" width="3" height="3" fill="#888"/><rect x="11.4" y="7.0" width="3" height="3" fill="#888"/><rect x="11.4" y="11.2" width="3" height="3" fill="#888"/><rect x="11.4" y="15.4" width="3" height="3" fill="#888"/><rect x="11.4" y="19.6" width="3" height="3" fill="#888"/><rect x="11.4" y="23.8" width="3" height="3" fill="#888"/><rect x="16.6" y="7.0" width="3" height="3" fill="#888"/><rect x="16.6" y="11.2" width="3" height="3" fill="#888"/><rect x="16.6" y="15.4" width="3" height="3" fill="#888"/><rect x="16.6" y="19.6" width="3" height="3" fill="#888"/><rect x="16.6" y="23.8" width="3" height="3" fill="#888"/><rect x="21.8" y="7.0" width="3" height="3" fill="#888"/><rect x="21.8" y="11.2" width="3" height="3" fill="#888"/><rect x="21.8" y="15.4" width="3" height="3" fill="#888"/><rect x="21.8" y="19.6" width="3" height="3" fill="#888"/><rect x="21.8" y="23.8" width="3" height="3" fill="#888"/><rect x="12" y="1" width="15" height="11" fill="#e8e8e8" stroke="#666" stroke-width="1"/><rect x="12" y="1" width="15" height="3" fill="#3344aa"/></svg>
<svg class="a" style="left:1384px;top:129.5px" width="12" height="10" viewBox="0 0 12 10"><path d="M1,1 L5,5 L1,9 M7,1 L11,5 L7,9" stroke="#444" stroke-width="1.5" fill="none"/></svg>
<div class="a" style="left:2px;top:158px;width:447px;height:30px;background:#d6e4f2;"></div>
<div class="t" style="left:9.4px;top:166.61px;font-size:17px;font-weight:700;color:#333;letter-spacing:0.773px;">Navigator - Data</div>
<svg class="a" style="left:396px;top:167px" width="13" height="13" viewBox="0 0 13 13"><rect x="3.5" y="1" width="8.5" height="8" fill="none" stroke="#333" stroke-width="1.8"/><rect x="1" y="4.5" width="8" height="7.5" fill="#d6e4f2" stroke="#333" stroke-width="1.8"/></svg>
<svg class="a" style="left:427px;top:168px" width="12" height="12" viewBox="0 0 12 12"><path d="M1,1 L11,11 M11,1 L1,11" stroke="#333" stroke-width="2.2"/></svg>
<div class="a" style="left:3px;top:188px;width:446px;height:763px;background:#fff;border:2px solid #c9c9d8;border-bottom:none"></div>
<div class="a" style="left:2px;top:951px;width:447px;height:35px;background:#f5f5f5;"></div>
<div class="a" style="left:3px;top:951px;width:2px;height:34px;background:#c9c9d8;"></div>
<div class="a" style="left:5px;top:951px;width:48px;height:34px;background:#fff;"></div>
<div class="a" style="left:3px;top:984px;width:446px;height:2px;background:#c9c9d8;"></div>
<div class="a" style="left:447px;top:951px;width:2px;height:35px;background:#c9c9d8;"></div>
<div class="a" style="left:52px;top:951px;width:47px;height:33px;background:#ececec;border:1px solid #c9c9d8;border-bottom:none"></div>
<div class="a" style="left:99px;top:951px;width:49px;height:33px;background:#ececec;border:1px solid #c9c9d8;border-bottom:none"></div>
<div class="a" style="left:52px;top:983px;width:96px;height:1px;background:#c9c9d8;"></div>
<svg class="a" style="left:15px;top:956px" width="25" height="25" viewBox="0 0 25 25"><rect x="5" y="1.5" width="19" height="3.5" fill="#3a7ad8"/><rect x="5" y="5" width="19" height="15" fill="#f3f3f3" stroke="#7a7a7a" stroke-width="1"/><path d="M0,6 L6,6 L7,8 L15,8 L15,19 L0,19 Z" fill="#e8c040" stroke="#c09820" stroke-width="0.8"/><path d="M6,19 Q9,15 14,13 Q17,16 21,16 Q17,20 16,23 Q11,19 6,19 Z" fill="#8cc0f0" stroke="#333" stroke-width="0.8"/><circle cx="6" cy="19" r="1.5" fill="#e00"/><circle cx="14" cy="13" r="1.5" fill="#e00"/><circle cx="21" cy="16" r="1.5" fill="#e00"/><circle cx="16" cy="23" r="1.5" fill="#e00"/></svg>
<svg class="a" style="left:64px;top:960px" width="22" height="15" viewBox="0 0 22 15"><path d="M1,7.5 Q11,-3 21,7.5 Q11,18 1,7.5 Z" fill="#fff" stroke="#23235a" stroke-width="1.8"/><circle cx="11" cy="7.5" r="4.2" fill="#3c78d8"/><circle cx="11" cy="7.5" r="2" fill="#111"/></svg>
<svg class="a" style="left:111px;top:960px" width="22" height="15" viewBox="0 0 22 15"><rect x="0" y="0.5" width="14" height="14" rx="2.5" fill="#6a6a6a"/><path d="M13,7.5 L21,1.5 L21,13.5 Z" fill="#6a6a6a"/></svg>
<div class="a" style="left:455px;top:158px;width:943px;height:828px;background:#fff;"></div>
<svg class="a" style="left:8px;top:194.0px" width="24" height="18" viewBox="0 0 24 18"><rect x="0" y="0" width="24" height="18" fill="#2b3075"/><rect x="0" y="11" width="24" height="2.2" fill="#fff"/><rect x="5.5" y="1" width="2.2" height="17" fill="#fff"/><path d="M0,8 L5.5,2.5 M8,2.5 L17,10.5 M8,2.5 L24,9" stroke="#fff" stroke-width="0.9" fill="none"/></svg>
<div class="t" style="left:40.4px;top:196.80px;font-size:15px;letter-spacing:-0.8px;">RFEM</div>
<svg class="a" style="left:12px;top:225.5px" width="15" height="9" viewBox="0 0 15 9"><polyline points="1,1 7.5,7.5 14,1" fill="none" stroke="#2a2a2a" stroke-width="1.5"/></svg>
<svg class="a" style="left:42px;top:218.0px" width="20" height="24" viewBox="0 0 20 24"><path d="M1.2,0.9 L14,0.9 L19.3,6.2 L19.3,23 L1.2,23 Z" fill="#fff" stroke="#5a5a5a" stroke-width="1.3"/><path d="M14,0.9 L14,6.2 L19.3,6.2" fill="#e6e6e6" stroke="#5a5a5a" stroke-width="1"/><path d="M-2,13.5 Q4,7 10,6.5 Q16,8 19,13.5 Q14,15 11,21 Q6,15 -2,13.5 Z" fill="#3a7ae0"/><path d="M0,12.5 Q6,9 12,10 Q15,11 17,14 M3,15 Q8,12 13,13 M4,9.5 Q9,13 10,19 M8,7.5 Q13,11 14,17" stroke="#1a2a50" stroke-width="1.1" fill="none" opacity="0.75"/><path d="M2,13.5 Q6,12 8,14 M12,15 Q14,16 13,18" stroke="#c4e0ff" stroke-width="1.2" fill="none"/></svg>
<div class="t" style="left:69.7px;top:223.80px;font-size:15px;font-weight:700;letter-spacing:0.656px;">prying_final.rf6*</div>
<svg class="a" style="left:45.5px;top:251.0px" width="9" height="14" viewBox="0 0 9 14"><polyline points="1,1 7,7 1,13" fill="none" stroke="#707070" stroke-width="1.4"/></svg>
<svg class="a" style="left:68px;top:247.0px" width="24" height="20" viewBox="0 0 24 20"><path d="M0.5,3.5 Q0.5,2 2,1.5 L3,0.6 L10,0.6 L11.5,2 L22,2 Q23.5,2 23.5,3.5 L23.5,18.5 Q23.5,20 22,20 L2,20 Q0.5,20 0.5,18.5 Z" fill="#f7eeb2" stroke="#c6ba6a" stroke-width="1"/><path d="M3,1.4 L10,1.4" stroke="#c6ba6a" stroke-width="1.2"/></svg>
<div class="t" style="left:99.4px;top:250.80px;font-size:15px;letter-spacing:-0.042px;">Basic Objects</div>
<svg class="a" style="left:45.5px;top:278.0px" width="9" height="14" viewBox="0 0 9 14"><polyline points="1,1 7,7 1,13" fill="none" stroke="#707070" stroke-width="1.4"/></svg>
<svg class="a" style="left:68px;top:274.0px" width="24" height="20" viewBox="0 0 24 20"><path d="M0.5,3.5 Q0.5,2 2,1.5 L3,0.6 L10,0.6 L11.5,2 L22,2 Q23.5,2 23.5,3.5 L23.5,18.5 Q23.5,20 22,20 L2,20 Q0.5,20 0.5,18.5 Z" fill="#f7eeb2" stroke="#c6ba6a" stroke-width="1"/><path d="M3,1.4 L10,1.4" stroke="#c6ba6a" stroke-width="1.2"/></svg>
<div class="t" style="left:100.0px;top:277.80px;font-size:15px;letter-spacing:0.043px;">Special Objects</div>
<svg class="a" style="left:45.5px;top:305.0px" width="9" height="14" viewBox="0 0 9 14"><polyline points="1,1 7,7 1,13" fill="none" stroke="#707070" stroke-width="1.4"/></svg>
<svg class="a" style="left:68px;top:301.0px" width="24" height="20" viewBox="0 0 24 20"><path d="M0.5,3.5 Q0.5,2 2,1.5 L3,0.6 L10,0.6 L11.5,2 L22,2 Q23.5,2 23.5,3.5 L23.5,18.5 Q23.5,20 22,20 L2,20 Q0.5,20 0.5,18.5 Z" fill="#f7eeb2" stroke="#c6ba6a" stroke-width="1"/><path d="M3,1.4 L10,1.4" stroke="#c6ba6a" stroke-width="1.2"/></svg>
<div class="t" style="left:99.9px;top:304.80px;font-size:15px;letter-spacing:0.186px;">Types for Nodes</div>
<svg class="a" style="left:45.5px;top:332.0px" width="9" height="14" viewBox="0 0 9 14"><polyline points="1,1 7,7 1,13" fill="none" stroke="#707070" stroke-width="1.4"/></svg>
<svg class="a" style="left:68px;top:328.0px" width="24" height="20" viewBox="0 0 24 20"><path d="M0.5,3.5 Q0.5,2 2,1.5 L3,0.6 L10,0.6 L11.5,2 L22,2 Q23.5,2 23.5,3.5 L23.5,18.5 Q23.5,20 22,20 L2,20 Q0.5,20 0.5,18.5 Z" fill="#f7eeb2" stroke="#c6ba6a" stroke-width="1"/><path d="M3,1.4 L10,1.4" stroke="#c6ba6a" stroke-width="1.2"/></svg>
<div class="t" style="left:99.9px;top:331.80px;font-size:15px;letter-spacing:0.079px;">Types for Lines</div>
<svg class="a" style="left:45.5px;top:359.0px" width="9" height="14" viewBox="0 0 9 14"><polyline points="1,1 7,7 1,13" fill="none" stroke="#707070" stroke-width="1.4"/></svg>
<svg class="a" style="left:68px;top:355.0px" width="24" height="20" viewBox="0 0 24 20"><path d="M0.5,3.5 Q0.5,2 2,1.5 L3,0.6 L10,0.6 L11.5,2 L22,2 Q23.5,2 23.5,3.5 L23.5,18.5 Q23.5,20 22,20 L2,20 Q0.5,20 0.5,18.5 Z" fill="#f7eeb2" stroke="#c6ba6a" stroke-width="1"/><path d="M3,1.4 L10,1.4" stroke="#c6ba6a" stroke-width="1.2"/></svg>
<div class="t" style="left:99.9px;top:358.80px;font-size:15px;letter-spacing:0.269px;">Types for Members</div>
<svg class="a" style="left:45.5px;top:386.0px" width="9" height="14" viewBox="0 0 9 14"><polyline points="1,1 7,7 1,13" fill="none" stroke="#707070" stroke-width="1.4"/></svg>
<svg class="a" style="left:68px;top:382.0px" width="24" height="20" viewBox="0 0 24 20"><path d="M0.5,3.5 Q0.5,2 2,1.5 L3,0.6 L10,0.6 L11.5,2 L22,2 Q23.5,2 23.5,3.5 L23.5,18.5 Q23.5,20 22,20 L2,20 Q0.5,20 0.5,18.5 Z" fill="#f7eeb2" stroke="#c6ba6a" stroke-width="1"/><path d="M3,1.4 L10,1.4" stroke="#c6ba6a" stroke-width="1.2"/></svg>
<div class="t" style="left:99.9px;top:385.80px;font-size:15px;letter-spacing:0.053px;">Types for Surfaces</div>
<svg class="a" style="left:45.5px;top:413.0px" width="9" height="14" viewBox="0 0 9 14"><polyline points="1,1 7,7 1,13" fill="none" stroke="#707070" stroke-width="1.4"/></svg>
<svg class="a" style="left:68px;top:409.0px" width="24" height="20" viewBox="0 0 24 20"><path d="M0.5,3.5 Q0.5,2 2,1.5 L3,0.6 L10,0.6 L11.5,2 L22,2 Q23.5,2 23.5,3.5 L23.5,18.5 Q23.5,20 22,20 L2,20 Q0.5,20 0.5,18.5 Z" fill="#f7eeb2" stroke="#c6ba6a" stroke-width="1"/><path d="M3,1.4 L10,1.4" stroke="#c6ba6a" stroke-width="1.2"/></svg>
<div class="t" style="left:99.9px;top:412.80px;font-size:15px;letter-spacing:0.173px;">Types for Solids</div>
<svg class="a" style="left:45.5px;top:440.0px" width="9" height="14" viewBox="0 0 9 14"><polyline points="1,1 7,7 1,13" fill="none" stroke="#707070" stroke-width="1.4"/></svg>
<svg class="a" style="left:68px;top:436.0px" width="24" height="20" viewBox="0 0 24 20"><path d="M0.5,3.5 Q0.5,2 2,1.5 L3,0.6 L10,0.6 L11.5,2 L22,2 Q23.5,2 23.5,3.5 L23.5,18.5 Q23.5,20 22,20 L2,20 Q0.5,20 0.5,18.5 Z" fill="#f7eeb2" stroke="#c6ba6a" stroke-width="1"/><path d="M3,1.4 L10,1.4" stroke="#c6ba6a" stroke-width="1.2"/></svg>
<div class="t" style="left:99.9px;top:439.80px;font-size:15px;letter-spacing:0.092px;">Types for Special Objects</div>
<svg class="a" style="left:42px;top:468.5px" width="15" height="9" viewBox="0 0 15 9"><polyline points="1,1 7.5,7.5 14,1" fill="none" stroke="#2a2a2a" stroke-width="1.5"/></svg>
<svg class="a" style="left:68px;top:463.0px" width="24" height="20" viewBox="0 0 24 20"><path d="M3.5,2.5 Q3.5,0.8 5,0.8 L10,0.8 L11,2.5 L22,2.5 Q23.5,2.5 23.5,4.5 L23.5,18.5 Q23.5,20 22,20 L5,20 Q3.5,20 3.5,18.5 Z" fill="#f7eeb2" stroke="#c4b866" stroke-width="1"/><path d="M1.5,4.8 L19.5,4.8 Q20.5,4.8 20.8,6 L22.8,18.5 Q23,20 21.5,20 L5,20 Q4,20 3.8,19 L1,6 Q0.8,4.8 1.5,4.8 Z" fill="#f7efb6" stroke="#c4b866" stroke-width="1.1"/></svg>
<div class="t" style="left:99.9px;top:466.80px;font-size:15px;letter-spacing:0.029px;">Types for Steel Joints</div>
<svg class="a" style="left:95px;top:487px" width="219" height="27" viewBox="0 0 219 27"><rect x="0.5" y="0.5" width="218" height="26" rx="2.5" fill="#cce8ff" stroke="#1a80d8" stroke-width="1"/><rect x="0.5" y="0.5" width="218" height="26" rx="2.5" fill="none" stroke="#000" stroke-width="1" stroke-dasharray="1,1"/></svg>
<svg class="a" style="left:72px;top:495.5px" width="15" height="9" viewBox="0 0 15 9"><polyline points="1,1 7.5,7.5 14,1" fill="none" stroke="#2a2a2a" stroke-width="1.5"/></svg>
<svg class="a" style="left:99px;top:489.0px" width="23" height="24" viewBox="0 0 23 24"><path d="M0,10 L10,0 L22,0 L22,10 Z" fill="#86a6f2"/><path d="M11,10 L22,1 L22,8 L18,10 Z" fill="#5674e4"/><rect x="7" y="10" width="15" height="11" fill="#7e9ef2"/><rect x="7" y="13.5" width="15" height="4" fill="#4866e2"/><path d="M0,23 L4,19 L14,19 L11,23 Z" fill="#7e9ef2"/><rect x="0" y="10" width="11" height="1.4" fill="#0c1c98"/><rect x="4.6" y="11" width="1.5" height="11.5" fill="#0c1c98"/><rect x="0" y="22" width="11" height="1.4" fill="#0c1c98"/><rect x="14" y="15" width="1" height="1" fill="#1a2a80"/><rect x="17" y="15" width="1" height="1" fill="#1a2a80"/></svg>
<div class="t" style="left:130.0px;top:493.80px;font-size:15px;letter-spacing:-0.064px;">Steel Joints</div>
<div class="a" style="left:128px;top:519.0px;width:17px;height:17px;background:#7fba00;"></div>
<div class="t" style="left:153.3px;top:520.80px;font-size:15px;letter-spacing:0.042px;">4 - Nodes : 1</div>
<div class="a" style="left:128px;top:546.0px;width:17px;height:17px;background:#ff0000;"></div>
<div class="t" style="left:153.0px;top:547.80px;font-size:15px;letter-spacing:0.067px;">5 - Nodes : 1</div>
<div class="a" style="left:128px;top:573.0px;width:17px;height:17px;background:#8b8cff;"></div>
<div class="t" style="left:152.9px;top:574.80px;font-size:15px;letter-spacing:0.075px;">6 - Nodes : 1</div>
<svg class="a" style="left:45.5px;top:602.0px" width="9" height="14" viewBox="0 0 9 14"><polyline points="1,1 7,7 1,13" fill="none" stroke="#707070" stroke-width="1.4"/></svg>
<svg class="a" style="left:68px;top:598.0px" width="24" height="20" viewBox="0 0 24 20"><path d="M0.5,3.5 Q0.5,2 2,1.5 L3,0.6 L10,0.6 L11.5,2 L22,2 Q23.5,2 23.5,3.5 L23.5,18.5 Q23.5,20 22,20 L2,20 Q0.5,20 0.5,18.5 Z" fill="#f7eeb2" stroke="#c6ba6a" stroke-width="1"/><path d="M3,1.4 L10,1.4" stroke="#c6ba6a" stroke-width="1.2"/></svg>
<div class="t" style="left:99.3px;top:601.80px;font-size:15px;letter-spacing:0.433px;">Imperfections</div>
<svg class="a" style="left:45.5px;top:629.0px" width="9" height="14" viewBox="0 0 9 14"><polyline points="1,1 7,7 1,13" fill="none" stroke="#707070" stroke-width="1.4"/></svg>
<svg class="a" style="left:68px;top:625.0px" width="24" height="20" viewBox="0 0 24 20"><path d="M0.5,3.5 Q0.5,2 2,1.5 L3,0.6 L10,0.6 L11.5,2 L22,2 Q23.5,2 23.5,3.5 L23.5,18.5 Q23.5,20 22,20 L2,20 Q0.5,20 0.5,18.5 Z" fill="#f7eeb2" stroke="#c6ba6a" stroke-width="1"/><path d="M3,1.4 L10,1.4" stroke="#c6ba6a" stroke-width="1.2"/></svg>
<div class="t" style="left:99.4px;top:628.80px;font-size:15px;letter-spacing:0.275px;">Load Cases &amp; Combinations</div>
<svg class="a" style="left:45.5px;top:656.0px" width="9" height="14" viewBox="0 0 9 14"><polyline points="1,1 7,7 1,13" fill="none" stroke="#707070" stroke-width="1.4"/></svg>
<svg class="a" style="left:68px;top:652.0px" width="24" height="20" viewBox="0 0 24 20"><path d="M0.5,3.5 Q0.5,2 2,1.5 L3,0.6 L10,0.6 L11.5,2 L22,2 Q23.5,2 23.5,3.5 L23.5,18.5 Q23.5,20 22,20 L2,20 Q0.5,20 0.5,18.5 Z" fill="#f7eeb2" stroke="#c6ba6a" stroke-width="1"/><path d="M3,1.4 L10,1.4" stroke="#c6ba6a" stroke-width="1.2"/></svg>
<div class="t" style="left:99.4px;top:655.80px;font-size:15px;letter-spacing:0.264px;">Load Wizards</div>
<svg class="a" style="left:45.5px;top:683.0px" width="9" height="14" viewBox="0 0 9 14"><polyline points="1,1 7,7 1,13" fill="none" stroke="#707070" stroke-width="1.4"/></svg>
<svg class="a" style="left:68px;top:679.0px" width="24" height="20" viewBox="0 0 24 20"><path d="M0.5,3.5 Q0.5,2 2,1.5 L3,0.6 L10,0.6 L11.5,2 L22,2 Q23.5,2 23.5,3.5 L23.5,18.5 Q23.5,20 22,20 L2,20 Q0.5,20 0.5,18.5 Z" fill="#f7eeb2" stroke="#c6ba6a" stroke-width="1"/><path d="M3,1.4 L10,1.4" stroke="#c6ba6a" stroke-width="1.2"/></svg>
<div class="t" style="left:99.4px;top:682.80px;font-size:15px;letter-spacing:0.1px;">Loads</div>
<svg class="a" style="left:68px;top:704.5px" width="23" height="24" viewBox="0 0 23 24"><path d="M2.4,3 L2.4,23 M0,21 L20,21" stroke="#484848" stroke-width="1.5" fill="none"/><path d="M0.2,4 L2.4,0.3 L4.6,4 Z M19.5,18.8 L23,21 L19.5,23.2 Z" fill="#484848"/><path d="M2.8,20.5 L8.5,9.8 L13,15.8 L20.2,0.8" stroke="#7ab8f8" stroke-width="1.3" fill="none"/></svg>
<div class="t" style="left:99.9px;top:709.80px;font-size:15px;letter-spacing:0.3px;">Calculation Diagrams</div>
<svg class="a" style="left:45.5px;top:737.0px" width="9" height="14" viewBox="0 0 9 14"><polyline points="1,1 7,7 1,13" fill="none" stroke="#707070" stroke-width="1.4"/></svg>
<svg class="a" style="left:68px;top:733.0px" width="24" height="20" viewBox="0 0 24 20"><path d="M0.5,3.5 Q0.5,2 2,1.5 L3,0.6 L10,0.6 L11.5,2 L22,2 Q23.5,2 23.5,3.5 L23.5,18.5 Q23.5,20 22,20 L2,20 Q0.5,20 0.5,18.5 Z" fill="#f7eeb2" stroke="#c6ba6a" stroke-width="1"/><path d="M3,1.4 L10,1.4" stroke="#c6ba6a" stroke-width="1.2"/></svg>
<div class="t" style="left:99.4px;top:736.80px;font-size:15px;letter-spacing:0.05px;">Results</div>
<svg class="a" style="left:45.5px;top:764.0px" width="9" height="14" viewBox="0 0 9 14"><polyline points="1,1 7,7 1,13" fill="none" stroke="#707070" stroke-width="1.4"/></svg>
<svg class="a" style="left:68px;top:760.0px" width="24" height="20" viewBox="0 0 24 20"><path d="M0.5,3.5 Q0.5,2 2,1.5 L3,0.6 L10,0.6 L11.5,2 L22,2 Q23.5,2 23.5,3.5 L23.5,18.5 Q23.5,20 22,20 L2,20 Q0.5,20 0.5,18.5 Z" fill="#f7eeb2" stroke="#c6ba6a" stroke-width="1"/><path d="M3,1.4 L10,1.4" stroke="#c6ba6a" stroke-width="1.2"/></svg>
<div class="t" style="left:99.9px;top:763.80px;font-size:15px;letter-spacing:0.167px;">Guide Objects</div>
<svg class="a" style="left:45.5px;top:791.0px" width="9" height="14" viewBox="0 0 9 14"><polyline points="1,1 7,7 1,13" fill="none" stroke="#707070" stroke-width="1.4"/></svg>
<svg class="a" style="left:68px;top:787.0px" width="24" height="20" viewBox="0 0 24 20"><path d="M0.5,3.5 Q0.5,2 2,1.5 L3,0.6 L10,0.6 L11.5,2 L22,2 Q23.5,2 23.5,3.5 L23.5,18.5 Q23.5,20 22,20 L2,20 Q0.5,20 0.5,18.5 Z" fill="#f7eeb2" stroke="#c6ba6a" stroke-width="1"/><path d="M3,1.4 L10,1.4" stroke="#c6ba6a" stroke-width="1.2"/></svg>
<div class="t" style="left:100.0px;top:790.80px;font-size:15px;letter-spacing:0.088px;">Steel Joint Design</div>
<svg class="a" style="left:68px;top:814.0px" width="24" height="20" viewBox="0 0 24 20"><path d="M0.5,3.5 Q0.5,2 2,1.5 L3,0.6 L10,0.6 L11.5,2 L22,2 Q23.5,2 23.5,3.5 L23.5,18.5 Q23.5,20 22,20 L2,20 Q0.5,20 0.5,18.5 Z" fill="#f7eeb2" stroke="#c6ba6a" stroke-width="1"/><path d="M3,1.4 L10,1.4" stroke="#c6ba6a" stroke-width="1.2"/></svg>
<div class="t" style="left:99.4px;top:817.80px;font-size:15px;letter-spacing:0.387px;">Printout Reports</div>
<svg class="a" style="left:15.5px;top:845.0px" width="9" height="14" viewBox="0 0 9 14"><polyline points="1,1 7,7 1,13" fill="none" stroke="#707070" stroke-width="1.4"/></svg>
<svg class="a" style="left:42px;top:839.0px" width="20" height="24" viewBox="0 0 20 24"><path d="M1.2,0.9 L14,0.9 L19.3,6.2 L19.3,23 L1.2,23 Z" fill="#fff" stroke="#5a5a5a" stroke-width="1.3"/><path d="M14,0.9 L14,6.2 L19.3,6.2" fill="#e6e6e6" stroke="#5a5a5a" stroke-width="1"/><path d="M-2,13.5 Q4,7 10,6.5 Q16,8 19,13.5 Q14,15 11,21 Q6,15 -2,13.5 Z" fill="#3a7ae0"/><path d="M0,12.5 Q6,9 12,10 Q15,11 17,14 M3,15 Q8,12 13,13 M4,9.5 Q9,13 10,19 M8,7.5 Q13,11 14,17" stroke="#1a2a50" stroke-width="1.1" fill="none" opacity="0.75"/><path d="M2,13.5 Q6,12 8,14 M12,15 Q14,16 13,18" stroke="#c4e0ff" stroke-width="1.2" fill="none"/></svg>
<div class="t" style="left:69.7px;top:844.80px;font-size:15px;letter-spacing:0.376px;">prying_final-SteelJoints-000004.rf6</div>
<svg class="a" style="left:15.5px;top:872.0px" width="9" height="14" viewBox="0 0 9 14"><polyline points="1,1 7,7 1,13" fill="none" stroke="#707070" stroke-width="1.4"/></svg>
<svg class="a" style="left:42px;top:866.0px" width="20" height="24" viewBox="0 0 20 24"><path d="M1.2,0.9 L14,0.9 L19.3,6.2 L19.3,23 L1.2,23 Z" fill="#fff" stroke="#5a5a5a" stroke-width="1.3"/><path d="M14,0.9 L14,6.2 L19.3,6.2" fill="#e6e6e6" stroke="#5a5a5a" stroke-width="1"/><path d="M-2,13.5 Q4,7 10,6.5 Q16,8 19,13.5 Q14,15 11,21 Q6,15 -2,13.5 Z" fill="#3a7ae0"/><path d="M0,12.5 Q6,9 12,10 Q15,11 17,14 M3,15 Q8,12 13,13 M4,9.5 Q9,13 10,19 M8,7.5 Q13,11 14,17" stroke="#1a2a50" stroke-width="1.1" fill="none" opacity="0.75"/><path d="M2,13.5 Q6,12 8,14 M12,15 Q14,16 13,18" stroke="#c4e0ff" stroke-width="1.2" fill="none"/></svg>
<div class="t" style="left:69.7px;top:871.80px;font-size:15px;letter-spacing:0.376px;">prying_final-SteelJoints-000005.rf6</div>
<div class="t" style="left:459.8px;top:167.56px;font-size:18px;color:#2a2a2a;letter-spacing:-0.5px;">CO1 - 3.00 * LC1</div>
<div class="t" style="left:459.6px;top:194.46px;font-size:18px;color:#2a2a2a;letter-spacing:-0.267px;">Loads [kN]</div>
<svg class="a" style="left:815px;top:170px" width="40" height="135" viewBox="0 0 40 135"><defs><linearGradient id="ag" x1="0" x2="1"><stop offset="0" stop-color="#1581cc"/><stop offset="0.5" stop-color="#1c93dc"/><stop offset="1" stop-color="#1581cc"/></linearGradient></defs><path d="M18.899999999999977,8.400000000000006 L30,38 L23,39 L23,127.30000000000001 L15,127.30000000000001 L15,39 L7.399999999999977,38 Z" fill="url(#ag)"/></svg>
<div class="t" style="left:807.5px;top:305.65px;font-size:14px;color:#1a9ff0;letter-spacing:1.3px;">300</div>
<svg class="a" style="left:740px;top:330px" width="190" height="660" viewBox="0 0 190 660"><defs>
<linearGradient id="cg" x1="0" x2="1" y1="0" y2="0">
<stop offset="0" stop-color="#8ea3fb"/><stop offset="0.15" stop-color="#8a9ff8"/>
<stop offset="0.4" stop-color="#8193e4"/><stop offset="0.55" stop-color="#7888d2"/>
<stop offset="0.66" stop-color="#6d7cc2"/><stop offset="0.76" stop-color="#7585d0"/>
<stop offset="0.84" stop-color="#8a9cee"/><stop offset="0.88" stop-color="#94a8fc"/>
<stop offset="0.92" stop-color="#a2b4ff"/><stop offset="0.95" stop-color="#90a3fa"/><stop offset="1" stop-color="#8a9df7"/>
</linearGradient>
<linearGradient id="ig" x1="0" x2="1" y1="0" y2="0">
<stop offset="0" stop-color="#8ea3fb"/><stop offset="0.12" stop-color="#a5b6ff"/>
<stop offset="0.16" stop-color="#8a9df2"/><stop offset="0.3" stop-color="#7383cb"/>
<stop offset="0.5" stop-color="#7a8bd8"/><stop offset="0.8" stop-color="#8b9ff5"/>
<stop offset="1" stop-color="#8ea3fb"/>
</linearGradient>
<linearGradient id="sg" x1="0" x2="1" y1="0" y2="0">
<stop offset="0" stop-color="#e9e9e9"/><stop offset="1" stop-color="#ffffff"/>
</linearGradient>
</defs><rect x="154" y="27" width="7" height="598" fill="url(#sg)"/><path d="M11.0,215.0 L71.5,188.1 L176.5,203.5" fill="none" stroke="#238a32" stroke-width="1.25"/><path d="M11.0,273.0 L71.5,245.5 L176.5,261.5" fill="none" stroke="#238a32" stroke-width="1.25" stroke-dasharray="1.5,1.5"/><path d="M11.0,389.5 L71.5,362.9 L176.5,378.8" fill="none" stroke="#238a32" stroke-width="1.25" stroke-dasharray="1.5,1.5"/><path d="M11.0,448.0 L71.5,420.6 L176.5,436.8" fill="none" stroke="#238a32" stroke-width="1.25"/><path d="M11.0,215.0 L11.0,273.0 M11.0,389.5 L11.0,448.0" stroke="#238a32" stroke-width="1.25" fill="none"/><path d="M11.0,273.0 L11.0,389.5" stroke="#238a32" stroke-width="1.1" stroke-dasharray="1.5,1.5" fill="none"/><path d="M176.5,203.5 L176.5,261.5 M176.5,378.8 L176.5,436.8" stroke="#238a32" stroke-width="1.25" fill="none"/><path d="M176.5,261.5 L176.5,378.8" stroke="#238a32" stroke-width="1.1" stroke-dasharray="1.5,1.5" fill="none"/><path d="M33.0,27.0 L33.0,625.0 A60.5,15.5 0 0 0 154.0,625.0 L154.0,27.0 Z" fill="url(#cg)"/><ellipse cx="93.5" cy="27" rx="59.5" ry="15.0" fill="url(#ig)"/><path d="M32.7,27 A60.8,15.8 0 1 0 154.3,27 A60.8,15.8 0 1 0 32.7,27 Z M35.6,27 A57.9,14.5 0 1 0 151.4,27 A57.9,14.5 0 1 0 35.6,27 Z" fill="#e2101c" fill-rule="evenodd"/><rect x="92.0" y="25.5" width="3" height="3" fill="#9aa6b8"/><path d="M98.0,640.5 L108.0,640.5" stroke="#22cc33" stroke-width="1.5"/><path d="M11.0,215.0 L116.0,230.4 L176.5,203.5" fill="none" stroke="#238a32" stroke-width="1.25"/><path d="M11.0,273.0 L116.0,289.0 L176.5,261.5" fill="none" stroke="#238a32" stroke-width="1.25" stroke-dasharray="1.5,1.5"/><path d="M11.0,389.5 L116.0,405.4 L176.5,378.8" fill="none" stroke="#238a32" stroke-width="1.25" stroke-dasharray="1.5,1.5"/><path d="M11.0,448.0 L116.0,464.2 L176.5,436.8" fill="none" stroke="#238a32" stroke-width="1.25"/><path d="M116.0,230.4 L116.0,289.0 M116.0,405.4 L116.0,464.2" stroke="#238a32" stroke-width="1.25" fill="none"/><path d="M116.0,289.0 L116.0,405.4" stroke="#238a32" stroke-width="1.1" stroke-dasharray="1.5,1.5" fill="none"/></svg>
<svg class="a" style="left:1220px;top:185px" width="160" height="150" viewBox="0 0 160 150"><polygon points="7.5,30.3 95.3,42.5 95.3,140.5 7.5,128.3" fill="#dedede"/><polygon points="95.3,42.5 146.8,19.8 146.8,117.8 95.3,140.5" fill="#cbcbcb"/><polygon points="7.5,30.3 95.3,42.5 146.8,19.8 59.0,7.6" fill="#b9b9b9"/><path d="M29.5,33.4 L29.5,131.4 M7.5,54.8 L95.3,67.0 M108.2,36.8 L108.2,134.8 M95.3,67.0 L146.8,44.3 M29.5,33.4 L81.0,10.7 M20.4,24.6 L108.2,36.8 M73.3,39.4 L73.3,137.4 M7.5,103.8 L95.3,116.0 M133.9,25.5 L133.9,123.5 M95.3,116.0 L146.8,93.3 M73.3,39.4 L124.8,16.8 M46.1,13.3 L133.9,25.5 " stroke="#1a1a1a" stroke-width="2.2" fill="none"/><polygon points="7.5,30.3 59.0,7.6 146.8,19.8 146.8,117.8 95.3,140.5 7.5,128.3" fill="none" stroke="#1a1a1a" stroke-width="1.6" stroke-linejoin="round"/><path d="M7.5,30.3 L95.3,42.5 L146.8,19.8 M95.3,42.5 L95.3,140.5" stroke="#1a1a1a" stroke-width="1.8" fill="none"/><g transform="translate(43,96) scale(0.78,1)"><text x="0" y="0" font-family="Liberation Sans" font-weight="700" font-size="21" fill="#72e872">-Y</text></g><g transform="translate(114,89) skewY(-23) scale(0.72,1)"><text x="0" y="0" font-family="Liberation Sans" font-weight="700" font-size="19" fill="#f07a7a">-X</text></g><g transform="translate(80,31) skewX(-30) scale(1,0.55)"><text x="0" y="0" font-family="Liberation Sans" font-weight="700" font-size="16" fill="#8a8ad8" opacity="0.55" text-anchor="middle">-Z</text></g></svg>
<svg class="a" style="left:1268px;top:894px" width="80" height="80" viewBox="0 0 80 80"><defs><clipPath id="avc"><circle cx="39.4" cy="39.5" r="37.4"/></clipPath>
<filter id="avb" x="-20%" y="-20%" width="140%" height="140%"><feGaussianBlur stdDeviation="0.7"/></filter>
<radialGradient id="hairg" cx="0.6" cy="0.45" r="0.6"><stop offset="0" stop-color="#b8a690"/><stop offset="0.6" stop-color="#9a8670"/><stop offset="1" stop-color="#8a7660"/></radialGradient>
<radialGradient id="faceg" cx="0.5" cy="0.45" r="0.6"><stop offset="0" stop-color="#e6c4ae"/><stop offset="1" stop-color="#c8a08a"/></radialGradient>
</defs>
<circle cx="39.4" cy="39.5" r="37.4" fill="#e6e6f1"/>
<g clip-path="url(#avc)"><g filter="url(#avb)">
<path d="M9,34 Q8,22 16,16 Q24,8 38,9 Q54,9 62,18 Q70,26 70,36 Q71,46 66,52 Q60,58 54,56 L26,57 Q16,58 12,50 Q8,44 10,38 Z" fill="url(#hairg)"/>
<path d="M58,22 Q66,30 67,40 Q66,48 62,52 L58,44 Z" fill="#c4b49c" opacity="0.8"/>
<path d="M20,26 Q14,34 15,44 L20,50 L22,34 Z" fill="#7c6a58" opacity="0.7"/>
<path d="M33,82 L30,54 L49,54 L46,82 Z" fill="#d0a088"/>
<ellipse cx="39.6" cy="38.5" rx="14" ry="19.5" fill="url(#faceg)"/>
<path d="M26,28 Q33,18 40,19 Q50,19 54,30 Q50,22 40,23 Q30,23 26,28 Z" fill="#9a8670"/>
<path d="M-2,82 L8,70 Q18,64 31,61 L33,82 Z" fill="#3a6cbc"/>
<path d="M81,82 L72,70 Q62,64 48,61 L46,82 Z" fill="#4a82d0"/>

<rect x="26" y="34.5" width="12.5" height="9.5" rx="3" fill="none" stroke="#3a56a0" stroke-width="1.5"/>
<rect x="41" y="34.5" width="12.5" height="9.5" rx="3" fill="none" stroke="#3a56a0" stroke-width="1.5"/>
<path d="M38.5,37 L41,37" stroke="#35529e" stroke-width="1.5"/>
<path d="M34.5,52 Q40,54.5 45.5,52" stroke="#b27a74" stroke-width="1.6" fill="none"/>
<ellipse cx="32" cy="39" rx="2" ry="1" fill="#7a6a60" opacity="0.7"/><ellipse cx="47" cy="39" rx="2" ry="1" fill="#7a6a60" opacity="0.7"/>
</g></g></svg>
<div class="a" style="left:2px;top:986px;width:1396px;height:1px;background:#e3e3e3;"></div>
<div class="a" style="left:2px;top:987px;width:1396px;height:36px;background:#f7f7f7;"></div>
<div class="a" style="left:2px;top:1023px;width:1396px;height:25px;background:#e7e7f0;border-radius:0 0 8px 8px;border-bottom:1px solid #fafafa"></div>
<svg class="a" style="left:6px;top:994px" width="24" height="24" viewBox="0 0 24 24"><rect x="10" y="1" width="13" height="10" fill="#e8e8e8" stroke="#666" stroke-width="1"/><rect x="10" y="1" width="13" height="3" fill="#3344aa"/><path d="M11,17 L21,19" stroke="#e04a1a" stroke-width="1.6"/><path d="M11,17 L3,21" stroke="#22a83a" stroke-width="1.6"/><path d="M11,17 L11,9" stroke="#1a4ad8" stroke-width="1.6"/><circle cx="11" cy="17" r="2" fill="#e8c020"/></svg>
<div class="a" style="left:36px;top:992px;width:210px;height:27px;background:#e6e6f0;"></div>
<div class="a" style="left:41px;top:997px;width:17px;height:17px;background:#ccfaff;"></div>
<div class="t" style="left:66.9px;top:999.30px;font-size:15px;letter-spacing:0.015px;">1 - Global XYZ</div>
<svg class="a" style="left:229px;top:1002px" width="13" height="8" viewBox="0 0 13 8"><path d="M0.5,0.5 L6.5,6.5 L12.5,0.5" stroke="#555" stroke-width="1.3" fill="none"/></svg>
<div class="a" style="left:252px;top:993px;width:1px;height:26px;background:#888;"></div>
<svg class="a" style="left:262px;top:992px" width="26" height="26" viewBox="0 0 26 26"><rect x="11" y="2" width="14" height="10" fill="#ececec" stroke="#777" stroke-width="1"/><rect x="11" y="2" width="14" height="3" fill="#3440a8"/><rect x="11" y="2" width="3" height="3" fill="#aaa"/><path d="M11,12 L19,12 L19,20 L15,24 Z" fill="#b8cce8"/><path d="M4,12 L8,8 L18,8 L14,12 Z" fill="#c0d4ee" stroke="#2a3a5a" stroke-width="0.6"/><path d="M14,12 L18,8 L18,18 L14,22 Z" fill="#8aa4cc" stroke="#2a3a5a" stroke-width="0.6"/><rect x="4" y="12" width="10" height="10" fill="#5f7fb0" stroke="#2a3a5a" stroke-width="0.6"/><g transform="translate(1,1) scale(0.72)"><path d="M7,0 L8.6,4.6 L13.5,3 L10.3,7 L13.8,10.6 L9,10 L7.5,14.5 L5.6,10 L0.6,11 L3.8,7 L0.5,3 L5.4,4.6 Z" fill="#fff200" stroke="#b8a800" stroke-width="0.5"/></g><path d="M1,11 L1,8 L4,8 M1,21 L1,25 L5,25 M14,25 L18,25 L18,22" stroke="#1a3ab8" stroke-width="1.8" fill="none"/></svg>
<svg class="a" style="left:295px;top:992px" width="26" height="26" viewBox="0 0 26 26"><path d="M8,8 L11,5 L18,5 L15,8 Z" fill="#c0d4ee" stroke="#2a3a5a" stroke-width="0.6"/><path d="M15,8 L18,5 L18,22 L15,25 Z" fill="#8aa4cc" stroke="#2a3a5a" stroke-width="0.6"/><rect x="8" y="8" width="7" height="17" fill="#5f7fb0" stroke="#2a3a5a" stroke-width="0.6"/><path d="M1,9 L1,6 L5,5 M8,3 L12,1 M17,1 L21,1 M21,5 L24,3" stroke="#1a3ab8" stroke-width="1.8" fill="none"/><path d="M18,8 L22,5 M1,9 L4,9" stroke="#1a3ab8" stroke-width="1.8" fill="none"/></svg>
<svg class="a" style="left:328px;top:992px" width="26" height="26" viewBox="0 0 26 26"><path d="M1,9 L4,6 L18,6 L15,9 Z" fill="#c0d4ee" stroke="#2a3a5a" stroke-width="0.6"/><path d="M15,9 L18,6 L18,15 L15,18 Z" fill="#8aa4cc" stroke="#2a3a5a" stroke-width="0.6"/><rect x="1" y="9" width="14" height="9" fill="#5f7fb0" stroke="#2a3a5a" stroke-width="0.6"/><path d="M19,1 L22,1 L22,4 M24,8 L24,14 M19,25 L22,25 L22,21" stroke="#1a3ab8" stroke-width="1.8" fill="none"/></svg>
<svg class="a" style="left:363px;top:992px" width="26" height="26" viewBox="0 0 26 26"><path d="M6,10 L10,6 L19,6 L15,10 Z" fill="#c0d4ee" stroke="#2a3a5a" stroke-width="0.6"/><path d="M15,10 L19,6 L19,15 L15,19 Z" fill="#8aa4cc" stroke="#2a3a5a" stroke-width="0.6"/><rect x="6" y="10" width="9" height="9" fill="#5f7fb0" stroke="#2a3a5a" stroke-width="0.6"/><path d="M1,6 L1,2 L5,2 M18,2 L22,2 L22,6 M1,19 L1,24 L5,24 M18,24 L22,24 L22,19" stroke="#1a3ab8" stroke-width="1.8" fill="none"/></svg>
<svg class="a" style="left:394px;top:992px" width="26" height="26" viewBox="0 0 26 26"><rect x="11" y="2" width="14" height="10" fill="#ececec" stroke="#777" stroke-width="1"/><rect x="11" y="2" width="14" height="3" fill="#3440a8"/><rect x="11" y="2" width="3" height="3" fill="#aaa"/><path d="M14,10 L22,10 L22,22 L14,25 Z" fill="#b8cce8" stroke="#3a5a98" stroke-width="0.6"/><path d="M8,8 L11,5 L16,5 L13,8 Z" fill="#c0d4ee" stroke="#2a3a5a" stroke-width="0.6"/><path d="M13,8 L16,5 L16,22 L13,25 Z" fill="#8aa4cc" stroke="#2a3a5a" stroke-width="0.6"/><rect x="8" y="8" width="5" height="17" fill="#5f7fb0" stroke="#2a3a5a" stroke-width="0.6"/><g transform="translate(1,1) scale(0.72)"><path d="M7,0 L8.6,4.6 L13.5,3 L10.3,7 L13.8,10.6 L9,10 L7.5,14.5 L5.6,10 L0.6,11 L3.8,7 L0.5,3 L5.4,4.6 Z" fill="#fff200" stroke="#b8a800" stroke-width="0.5"/></g><path d="M1,11 L1,8 L4,8 M1,21 L1,25 L5,25 M20,25 L24,25 L24,21" stroke="#1a3ab8" stroke-width="1.8" fill="none"/></svg>
<div class="a" style="left:428px;top:993px;width:1px;height:26px;background:#888;"></div>
<svg class="a" style="left:438px;top:992px" width="26" height="26" viewBox="0 0 26 26"><rect x="10" y="1" width="15" height="11" fill="#e8e8e8" stroke="#666" stroke-width="1"/><rect x="10" y="1" width="15" height="3" fill="#3344aa"/><path d="M1,14 L6,10 L20,10 L15,14 Z" fill="#e8dc80" stroke="#333" stroke-width="0.8"/><path d="M1,19 L6,15 L20,15 L15,19 Z" fill="#888" stroke="#333" stroke-width="0.8"/><path d="M1,24 L6,20 L20,20 L15,24 Z" fill="#aaa" stroke="#333" stroke-width="0.8"/><g transform="translate(0,0) scale(0.75)"><path d="M7,0 L8.6,4.6 L13.5,3 L10.3,7 L13.8,10.6 L9,10 L7.5,14.5 L5.6,10 L0.6,11 L3.8,7 L0.5,3 L5.4,4.6 Z" fill="#fff200" stroke="#b8a800" stroke-width="0.5"/></g></svg>
<svg class="a" style="left:474px;top:999.5px" width="12" height="10" viewBox="0 0 12 10"><path d="M1,1 L5,5 L1,9 M7,1 L11,5 L7,9" stroke="#444" stroke-width="1.5" fill="none"/></svg>
<svg class="a" style="left:521px;top:992px" width="26" height="26" viewBox="0 0 26 26"><rect x="2.0" y="5.0" width="2.6" height="2.6" fill="#777"/><rect x="2.0" y="9.2" width="2.6" height="2.6" fill="#777"/><rect x="2.0" y="13.4" width="2.6" height="2.6" fill="#777"/><rect x="2.0" y="17.6" width="2.6" height="2.6" fill="#777"/><rect x="2.0" y="21.8" width="2.6" height="2.6" fill="#777"/><rect x="6.4" y="5.0" width="2.6" height="2.6" fill="#777"/><rect x="6.4" y="9.2" width="2.6" height="2.6" fill="#777"/><rect x="6.4" y="13.4" width="2.6" height="2.6" fill="#777"/><rect x="6.4" y="17.6" width="2.6" height="2.6" fill="#777"/><rect x="6.4" y="21.8" width="2.6" height="2.6" fill="#777"/><rect x="10.8" y="5.0" width="2.6" height="2.6" fill="#777"/><rect x="10.8" y="9.2" width="2.6" height="2.6" fill="#777"/><rect x="10.8" y="13.4" width="2.6" height="2.6" fill="#777"/><rect x="10.8" y="17.6" width="2.6" height="2.6" fill="#777"/><rect x="10.8" y="21.8" width="2.6" height="2.6" fill="#777"/><rect x="15.200000000000001" y="5.0" width="2.6" height="2.6" fill="#777"/><rect x="15.200000000000001" y="9.2" width="2.6" height="2.6" fill="#777"/><rect x="15.200000000000001" y="13.4" width="2.6" height="2.6" fill="#777"/><rect x="15.200000000000001" y="17.6" width="2.6" height="2.6" fill="#777"/><rect x="15.200000000000001" y="21.8" width="2.6" height="2.6" fill="#777"/><rect x="19.6" y="5.0" width="2.6" height="2.6" fill="#777"/><rect x="19.6" y="9.2" width="2.6" height="2.6" fill="#777"/><rect x="19.6" y="13.4" width="2.6" height="2.6" fill="#777"/><rect x="19.6" y="17.6" width="2.6" height="2.6" fill="#777"/><rect x="19.6" y="21.8" width="2.6" height="2.6" fill="#777"/><g transform="translate(10,1) scale(1.0)"><path d="M0,5 Q7,-2.5 14,5 Q7,12.5 0,5 Z" fill="#fff" stroke="#24235c" stroke-width="1.8"/><circle cx="7" cy="5" r="3.2" fill="#3f72c9"/><circle cx="7" cy="5" r="1.3" fill="#111"/></g></svg>
<svg class="a" style="left:564px;top:992px" width="26" height="26" viewBox="0 0 26 26"><rect x="2.0" y="5.0" width="2.6" height="2.6" fill="#777"/><rect x="2.0" y="9.2" width="2.6" height="2.6" fill="#777"/><rect x="2.0" y="13.4" width="2.6" height="2.6" fill="#777"/><rect x="2.0" y="17.6" width="2.6" height="2.6" fill="#777"/><rect x="2.0" y="21.8" width="2.6" height="2.6" fill="#777"/><rect x="6.4" y="5.0" width="2.6" height="2.6" fill="#777"/><rect x="6.4" y="9.2" width="2.6" height="2.6" fill="#777"/><rect x="6.4" y="13.4" width="2.6" height="2.6" fill="#777"/><rect x="6.4" y="17.6" width="2.6" height="2.6" fill="#777"/><rect x="6.4" y="21.8" width="2.6" height="2.6" fill="#777"/><rect x="10.8" y="5.0" width="2.6" height="2.6" fill="#777"/><rect x="10.8" y="9.2" width="2.6" height="2.6" fill="#777"/><rect x="10.8" y="13.4" width="2.6" height="2.6" fill="#777"/><rect x="10.8" y="17.6" width="2.6" height="2.6" fill="#777"/><rect x="10.8" y="21.8" width="2.6" height="2.6" fill="#777"/><rect x="15.200000000000001" y="5.0" width="2.6" height="2.6" fill="#777"/><rect x="15.200000000000001" y="9.2" width="2.6" height="2.6" fill="#777"/><rect x="15.200000000000001" y="13.4" width="2.6" height="2.6" fill="#777"/><rect x="15.200000000000001" y="17.6" width="2.6" height="2.6" fill="#777"/><rect x="15.200000000000001" y="21.8" width="2.6" height="2.6" fill="#777"/><rect x="19.6" y="5.0" width="2.6" height="2.6" fill="#777"/><rect x="19.6" y="9.2" width="2.6" height="2.6" fill="#777"/><rect x="19.6" y="13.4" width="2.6" height="2.6" fill="#777"/><rect x="19.6" y="17.6" width="2.6" height="2.6" fill="#777"/><rect x="19.6" y="21.8" width="2.6" height="2.6" fill="#777"/><rect x="11" y="1" width="14" height="10" fill="#e8e8e8" stroke="#666" stroke-width="1"/><rect x="11" y="1" width="14" height="3" fill="#3344aa"/><g transform="translate(0,2) scale(0.75)"><path d="M7,0 L8.6,4.6 L13.5,3 L10.3,7 L13.8,10.6 L9,10 L7.5,14.5 L5.6,10 L0.6,11 L3.8,7 L0.5,3 L5.4,4.6 Z" fill="#fff200" stroke="#b8a800" stroke-width="0.5"/></g></svg>
<div class="a" style="left:595px;top:991px;width:31px;height:29px;background:#cce4f7;border:1px solid #9ccdf0;border-radius:3px"></div>
<svg class="a" style="left:598px;top:992px" width="26" height="26" viewBox="0 0 26 26"><rect x="2.0" y="5.0" width="2.6" height="2.6" fill="#777"/><rect x="2.0" y="9.2" width="2.6" height="2.6" fill="#777"/><rect x="2.0" y="13.4" width="2.6" height="2.6" fill="#777"/><rect x="2.0" y="17.6" width="2.6" height="2.6" fill="#777"/><rect x="2.0" y="21.8" width="2.6" height="2.6" fill="#777"/><rect x="6.4" y="5.0" width="2.6" height="2.6" fill="#777"/><rect x="6.4" y="9.2" width="2.6" height="2.6" fill="#777"/><rect x="6.4" y="13.4" width="2.6" height="2.6" fill="#777"/><rect x="6.4" y="17.6" width="2.6" height="2.6" fill="#777"/><rect x="6.4" y="21.8" width="2.6" height="2.6" fill="#777"/><rect x="10.8" y="5.0" width="2.6" height="2.6" fill="#777"/><rect x="10.8" y="9.2" width="2.6" height="2.6" fill="#777"/><rect x="10.8" y="13.4" width="2.6" height="2.6" fill="#777"/><rect x="10.8" y="17.6" width="2.6" height="2.6" fill="#777"/><rect x="10.8" y="21.8" width="2.6" height="2.6" fill="#777"/><rect x="15.200000000000001" y="5.0" width="2.6" height="2.6" fill="#777"/><rect x="15.200000000000001" y="9.2" width="2.6" height="2.6" fill="#777"/><rect x="15.200000000000001" y="13.4" width="2.6" height="2.6" fill="#777"/><rect x="15.200000000000001" y="17.6" width="2.6" height="2.6" fill="#777"/><rect x="15.200000000000001" y="21.8" width="2.6" height="2.6" fill="#777"/><rect x="19.6" y="5.0" width="2.6" height="2.6" fill="#777"/><rect x="19.6" y="9.2" width="2.6" height="2.6" fill="#777"/><rect x="19.6" y="13.4" width="2.6" height="2.6" fill="#777"/><rect x="19.6" y="17.6" width="2.6" height="2.6" fill="#777"/><rect x="19.6" y="21.8" width="2.6" height="2.6" fill="#777"/><g transform="translate(10,1) scale(1.0)"><path d="M0,5 Q7,-2.5 14,5 Q7,12.5 0,5 Z" fill="#fff" stroke="#24235c" stroke-width="1.8"/><circle cx="7" cy="5" r="3.2" fill="#3f72c9"/><circle cx="7" cy="5" r="1.3" fill="#111"/></g></svg>
<svg class="a" style="left:640px;top:992px" width="26" height="26" viewBox="0 0 26 26"><rect x="3" y="5" width="19" height="19" fill="none" stroke="#555" stroke-width="1.2" stroke-dasharray="1.5,1.5"/><g transform="translate(0,1) scale(0.75)"><path d="M7,0 L8.6,4.6 L13.5,3 L10.3,7 L13.8,10.6 L9,10 L7.5,14.5 L5.6,10 L0.6,11 L3.8,7 L0.5,3 L5.4,4.6 Z" fill="#fff200" stroke="#b8a800" stroke-width="0.5"/></g></svg>
<div class="a" style="left:672px;top:991px;width:31px;height:29px;background:#cce4f7;border:1px solid #9ccdf0;border-radius:3px"></div>
<svg class="a" style="left:675px;top:992px" width="26" height="26" viewBox="0 0 26 26"><rect x="3" y="5" width="19" height="19" fill="none" stroke="#555" stroke-width="1.2" stroke-dasharray="1.5,1.5"/><g transform="translate(10,1) scale(1.0)"><path d="M0,5 Q7,-2.5 14,5 Q7,12.5 0,5 Z" fill="#fff" stroke="#24235c" stroke-width="1.8"/><circle cx="7" cy="5" r="3.2" fill="#3f72c9"/><circle cx="7" cy="5" r="1.3" fill="#111"/></g></svg>
<svg class="a" style="left:728px;top:994px" width="24" height="24" viewBox="0 0 24 24"><path d="M3,2 L3,22 L22,22" stroke="#666" stroke-width="1.4" fill="none"/><path d="M3,15 L10,15 L10,22" stroke="#666" stroke-width="1" fill="none"/></svg>
<div class="a" style="left:769px;top:991px;width:31px;height:29px;background:#cce4f7;border:1px solid #9ccdf0;border-radius:3px"></div>
<div class="a" style="left:802px;top:991px;width:31px;height:29px;background:#cce4f7;border:1px solid #9ccdf0;border-radius:3px"></div>
<div class="a" style="left:835px;top:991px;width:31px;height:29px;background:#cce4f7;border:1px solid #9ccdf0;border-radius:3px"></div>
<div class="a" style="left:868px;top:991px;width:31px;height:29px;background:#cce4f7;border:1px solid #9ccdf0;border-radius:3px"></div>
<svg class="a" style="left:772px;top:992px" width="26" height="26" viewBox="0 0 26 26"><rect x="2.0" y="5.0" width="2.6" height="2.6" fill="#777"/><rect x="2.0" y="9.2" width="2.6" height="2.6" fill="#777"/><rect x="2.0" y="13.4" width="2.6" height="2.6" fill="#777"/><rect x="2.0" y="17.6" width="2.6" height="2.6" fill="#777"/><rect x="2.0" y="21.8" width="2.6" height="2.6" fill="#777"/><rect x="6.4" y="5.0" width="2.6" height="2.6" fill="#777"/><rect x="6.4" y="9.2" width="2.6" height="2.6" fill="#777"/><rect x="6.4" y="13.4" width="2.6" height="2.6" fill="#777"/><rect x="6.4" y="17.6" width="2.6" height="2.6" fill="#777"/><rect x="6.4" y="21.8" width="2.6" height="2.6" fill="#777"/><rect x="10.8" y="5.0" width="2.6" height="2.6" fill="#777"/><rect x="10.8" y="9.2" width="2.6" height="2.6" fill="#777"/><rect x="10.8" y="13.4" width="2.6" height="2.6" fill="#777"/><rect x="10.8" y="17.6" width="2.6" height="2.6" fill="#777"/><rect x="10.8" y="21.8" width="2.6" height="2.6" fill="#777"/><rect x="15.200000000000001" y="5.0" width="2.6" height="2.6" fill="#777"/><rect x="15.200000000000001" y="9.2" width="2.6" height="2.6" fill="#777"/><rect x="15.200000000000001" y="13.4" width="2.6" height="2.6" fill="#777"/><rect x="15.200000000000001" y="17.6" width="2.6" height="2.6" fill="#777"/><rect x="15.200000000000001" y="21.8" width="2.6" height="2.6" fill="#777"/><rect x="19.6" y="5.0" width="2.6" height="2.6" fill="#777"/><rect x="19.6" y="9.2" width="2.6" height="2.6" fill="#777"/><rect x="19.6" y="13.4" width="2.6" height="2.6" fill="#777"/><rect x="19.6" y="17.6" width="2.6" height="2.6" fill="#777"/><rect x="19.6" y="21.8" width="2.6" height="2.6" fill="#777"/><path d="M13,12 Q13,3 19,3 Q25,3 25,12" stroke="#888" stroke-width="3.5" fill="none"/><rect x="11" y="11" width="4" height="3" fill="#c8281a"/><rect x="23" y="11" width="4" height="3" fill="#1a4ab8"/></svg>
<svg class="a" style="left:805px;top:992px" width="26" height="26" viewBox="0 0 26 26"><path d="M5,20 L5,12 Q5,4 13,4 Q21,4 21,12 L21,20" stroke="#9a9aa8" stroke-width="5" fill="none"/><rect x="2" y="17" width="6" height="4" fill="#c8281a"/><rect x="18" y="17" width="6" height="4" fill="#1a4ab8"/></svg>
<svg class="a" style="left:838px;top:992px" width="26" height="26" viewBox="0 0 26 26"><rect x="6" y="7" width="13" height="13" fill="none" stroke="#555" stroke-width="1.4"/></svg>
<svg class="a" style="left:871px;top:992px" width="26" height="26" viewBox="0 0 26 26"><circle cx="13" cy="13" r="8" fill="none" stroke="#555" stroke-width="1.4"/><path d="M7.5,7.5 L18.5,18.5 M18.5,7.5 L7.5,18.5" stroke="#555" stroke-width="1.4"/></svg>
<svg class="a" style="left:903px;top:992px" width="26" height="26" viewBox="0 0 26 26"><rect x="6" y="7" width="13" height="13" fill="none" stroke="#555" stroke-width="1.4"/><path d="M6,7 L19,20 M19,7 L6,20" stroke="#555" stroke-width="1.4"/></svg>
<svg class="a" style="left:936px;top:992px" width="26" height="26" viewBox="0 0 26 26"><path d="M6,5 L6,20 L20,20 M6,13 L13,13 L13,20" stroke="#555" stroke-width="1.4" fill="none"/></svg>
<svg class="a" style="left:969px;top:992px" width="26" height="26" viewBox="0 0 26 26"><path d="M5,21 L20,6" stroke="#555" stroke-width="1.4" stroke-dasharray="3,1.5"/><path d="M5,21 L9,17" stroke="#555" stroke-width="2"/></svg>
<svg class="a" style="left:1002px;top:992px" width="26" height="26" viewBox="0 0 26 26"><path d="M4,17 L14,7 M10,21 L20,11" stroke="#555" stroke-width="1.4"/></svg>
<svg class="a" style="left:1035px;top:992px" width="26" height="26" viewBox="0 0 26 26"><path d="M5,5 L21,5" stroke="#555" stroke-width="1.4"/><circle cx="13" cy="15" r="7" fill="none" stroke="#555" stroke-width="1.4"/></svg>
<svg class="a" style="left:1068px;top:992px" width="26" height="26" viewBox="0 0 26 26"><circle cx="13" cy="13" r="9" fill="none" stroke="#555" stroke-width="1.4"/><path d="M13,6 L20,13 L13,20 L6,13 Z" fill="none" stroke="#555" stroke-width="1.3"/></svg>
<svg class="a" style="left:1101px;top:992px" width="26" height="26" viewBox="0 0 26 26"><path d="M4,15 L20,7 M6,19 L22,11 M8,6 L14,20 M14,4 L20,18" stroke="#555" stroke-width="1.3"/></svg>
<svg class="a" style="left:1134px;top:992px" width="26" height="26" viewBox="0 0 26 26"><path d="M4,18 L22,8 M8,8 L16,18 M14,8 L20,8 L20,14" stroke="#555" stroke-width="1.3" fill="none"/></svg>
<svg class="a" style="left:1167px;top:992px" width="26" height="26" viewBox="0 0 26 26"><path d="M4,18 L22,8 M8,8 L16,18" stroke="#555" stroke-width="1.3" stroke-dasharray="2,1.5"/></svg>
<svg class="a" style="left:1200px;top:992px" width="26" height="26" viewBox="0 0 26 26"><circle cx="6" cy="19" r="1" fill="#777"/><circle cx="11" cy="13" r="1" fill="#777"/><circle cx="16" cy="9" r="1" fill="#777"/><circle cx="20" cy="14" r="1" fill="#777"/><circle cx="14" cy="18" r="1" fill="#777"/><circle cx="9" cy="8" r="1" fill="#777"/><circle cx="19" cy="20" r="1" fill="#777"/></svg>
<div class="a" style="left:1231px;top:991px;width:31px;height:29px;background:#cce4f7;border:1px solid #9ccdf0;border-radius:3px"></div>
<div class="a" style="left:1264px;top:991px;width:31px;height:29px;background:#cce4f7;border:1px solid #9ccdf0;border-radius:3px"></div>
<div class="a" style="left:1297px;top:991px;width:31px;height:29px;background:#cce4f7;border:1px solid #9ccdf0;border-radius:3px"></div>
<div class="a" style="left:1330px;top:991px;width:31px;height:29px;background:#cce4f7;border:1px solid #9ccdf0;border-radius:3px"></div>
<div class="a" style="left:1363px;top:991px;width:31px;height:29px;background:#cce4f7;border:1px solid #9ccdf0;border-radius:3px"></div>
<svg class="a" style="left:1234px;top:992px" width="26" height="26" viewBox="0 0 26 26"><rect x="4.0" y="4.0" width="1.8" height="1.8" fill="#666"/><rect x="4.0" y="7.6" width="1.8" height="1.8" fill="#666"/><rect x="4.0" y="11.2" width="1.8" height="1.8" fill="#666"/><rect x="4.0" y="14.8" width="1.8" height="1.8" fill="#666"/><rect x="4.0" y="18.4" width="1.8" height="1.8" fill="#666"/><rect x="4.0" y="22.0" width="1.8" height="1.8" fill="#666"/><rect x="7.6" y="4.0" width="1.8" height="1.8" fill="#666"/><rect x="7.6" y="7.6" width="1.8" height="1.8" fill="#666"/><rect x="7.6" y="11.2" width="1.8" height="1.8" fill="#666"/><rect x="7.6" y="14.8" width="1.8" height="1.8" fill="#666"/><rect x="7.6" y="18.4" width="1.8" height="1.8" fill="#666"/><rect x="7.6" y="22.0" width="1.8" height="1.8" fill="#666"/><rect x="11.2" y="4.0" width="1.8" height="1.8" fill="#666"/><rect x="11.2" y="7.6" width="1.8" height="1.8" fill="#666"/><rect x="11.2" y="11.2" width="1.8" height="1.8" fill="#666"/><rect x="11.2" y="14.8" width="1.8" height="1.8" fill="#666"/><rect x="11.2" y="18.4" width="1.8" height="1.8" fill="#666"/><rect x="11.2" y="22.0" width="1.8" height="1.8" fill="#666"/><rect x="14.8" y="4.0" width="1.8" height="1.8" fill="#666"/><rect x="14.8" y="7.6" width="1.8" height="1.8" fill="#666"/><rect x="14.8" y="11.2" width="1.8" height="1.8" fill="#666"/><rect x="14.8" y="14.8" width="1.8" height="1.8" fill="#666"/><rect x="14.8" y="18.4" width="1.8" height="1.8" fill="#666"/><rect x="14.8" y="22.0" width="1.8" height="1.8" fill="#666"/><rect x="18.4" y="4.0" width="1.8" height="1.8" fill="#666"/><rect x="18.4" y="7.6" width="1.8" height="1.8" fill="#666"/><rect x="18.4" y="11.2" width="1.8" height="1.8" fill="#666"/><rect x="18.4" y="14.8" width="1.8" height="1.8" fill="#666"/><rect x="18.4" y="18.4" width="1.8" height="1.8" fill="#666"/><rect x="18.4" y="22.0" width="1.8" height="1.8" fill="#666"/><rect x="22.0" y="4.0" width="1.8" height="1.8" fill="#666"/><rect x="22.0" y="7.6" width="1.8" height="1.8" fill="#666"/><rect x="22.0" y="11.2" width="1.8" height="1.8" fill="#666"/><rect x="22.0" y="14.8" width="1.8" height="1.8" fill="#666"/><rect x="22.0" y="18.4" width="1.8" height="1.8" fill="#666"/><rect x="22.0" y="22.0" width="1.8" height="1.8" fill="#666"/></svg>
<svg class="a" style="left:1267px;top:992px" width="26" height="26" viewBox="0 0 26 26"><rect x="5" y="5" width="16" height="16" fill="none" stroke="#555" stroke-width="1.4" stroke-dasharray="1.6,1.6"/></svg>
<svg class="a" style="left:1300px;top:992px" width="26" height="26" viewBox="0 0 26 26"><path d="M4,17 L9,12 L22,12 L17,17 Z M4,13 L9,8 L22,8 L17,13 Z M4,21 L9,16 L22,16 L17,21 Z" fill="#f0f0f0" stroke="#555" stroke-width="1.2"/></svg>
<svg class="a" style="left:1333px;top:992px" width="26" height="26" viewBox="0 0 26 26"><rect x="4" y="10" width="18" height="6" fill="#555"/><circle cx="4" cy="10" r="1.5" fill="#e00"/><circle cx="22" cy="10" r="1.5" fill="#e00"/><circle cx="4" cy="16" r="1.5" fill="#e00"/><circle cx="22" cy="16" r="1.5" fill="#e00"/></svg>
<svg class="a" style="left:1366px;top:992px" width="26" height="26" viewBox="0 0 26 26"><path d="M13,3 L13,12 M10,9 L13,13 L16,9" stroke="#555" stroke-width="1.4" fill="none"/><rect x="9" y="15" width="8" height="8" fill="none" stroke="#555" stroke-width="1.4"/></svg>
<div class="a" style="left:485px;top:1024px;width:1px;height:22px;background:#d4d4dc;"></div>
<div class="a" style="left:641px;top:1024px;width:1px;height:22px;background:#d4d4dc;"></div>
<div class="a" style="left:948px;top:1024px;width:1px;height:22px;background:#d4d4dc;"></div>
<div class="a" style="left:1043px;top:1024px;width:1px;height:22px;background:#d4d4dc;"></div>
<div class="a" style="left:1155px;top:1024px;width:1px;height:22px;background:#d4d4dc;"></div>
<div class="a" style="left:1266px;top:1024px;width:1px;height:22px;background:#d4d4dc;"></div>
<div class="a" style="left:1376px;top:1024px;width:1px;height:22px;background:#d4d4dc;"></div>
<svg class="a" style="left:1384px;top:1034px" width="12" height="12" viewBox="0 0 12 12"><rect x="9" y="1" width="2.6" height="2.6" fill="#b4b4b4"/><rect x="5" y="5" width="2.6" height="2.6" fill="#b4b4b4"/><rect x="9" y="5" width="2.6" height="2.6" fill="#b4b4b4"/><rect x="1" y="9" width="2.6" height="2.6" fill="#b4b4b4"/><rect x="5" y="9" width="2.6" height="2.6" fill="#b4b4b4"/><rect x="9" y="9" width="2.6" height="2.6" fill="#b4b4b4"/></svg>
<div class="t" style="left:646.3px;top:1029.30px;font-size:15px;letter-spacing:-0.285px;">CS: Global XYZ</div>
<div class="t" style="left:951.8px;top:1029.30px;font-size:15px;letter-spacing:-0.4px;">Plane: XY</div>
</body></html>
